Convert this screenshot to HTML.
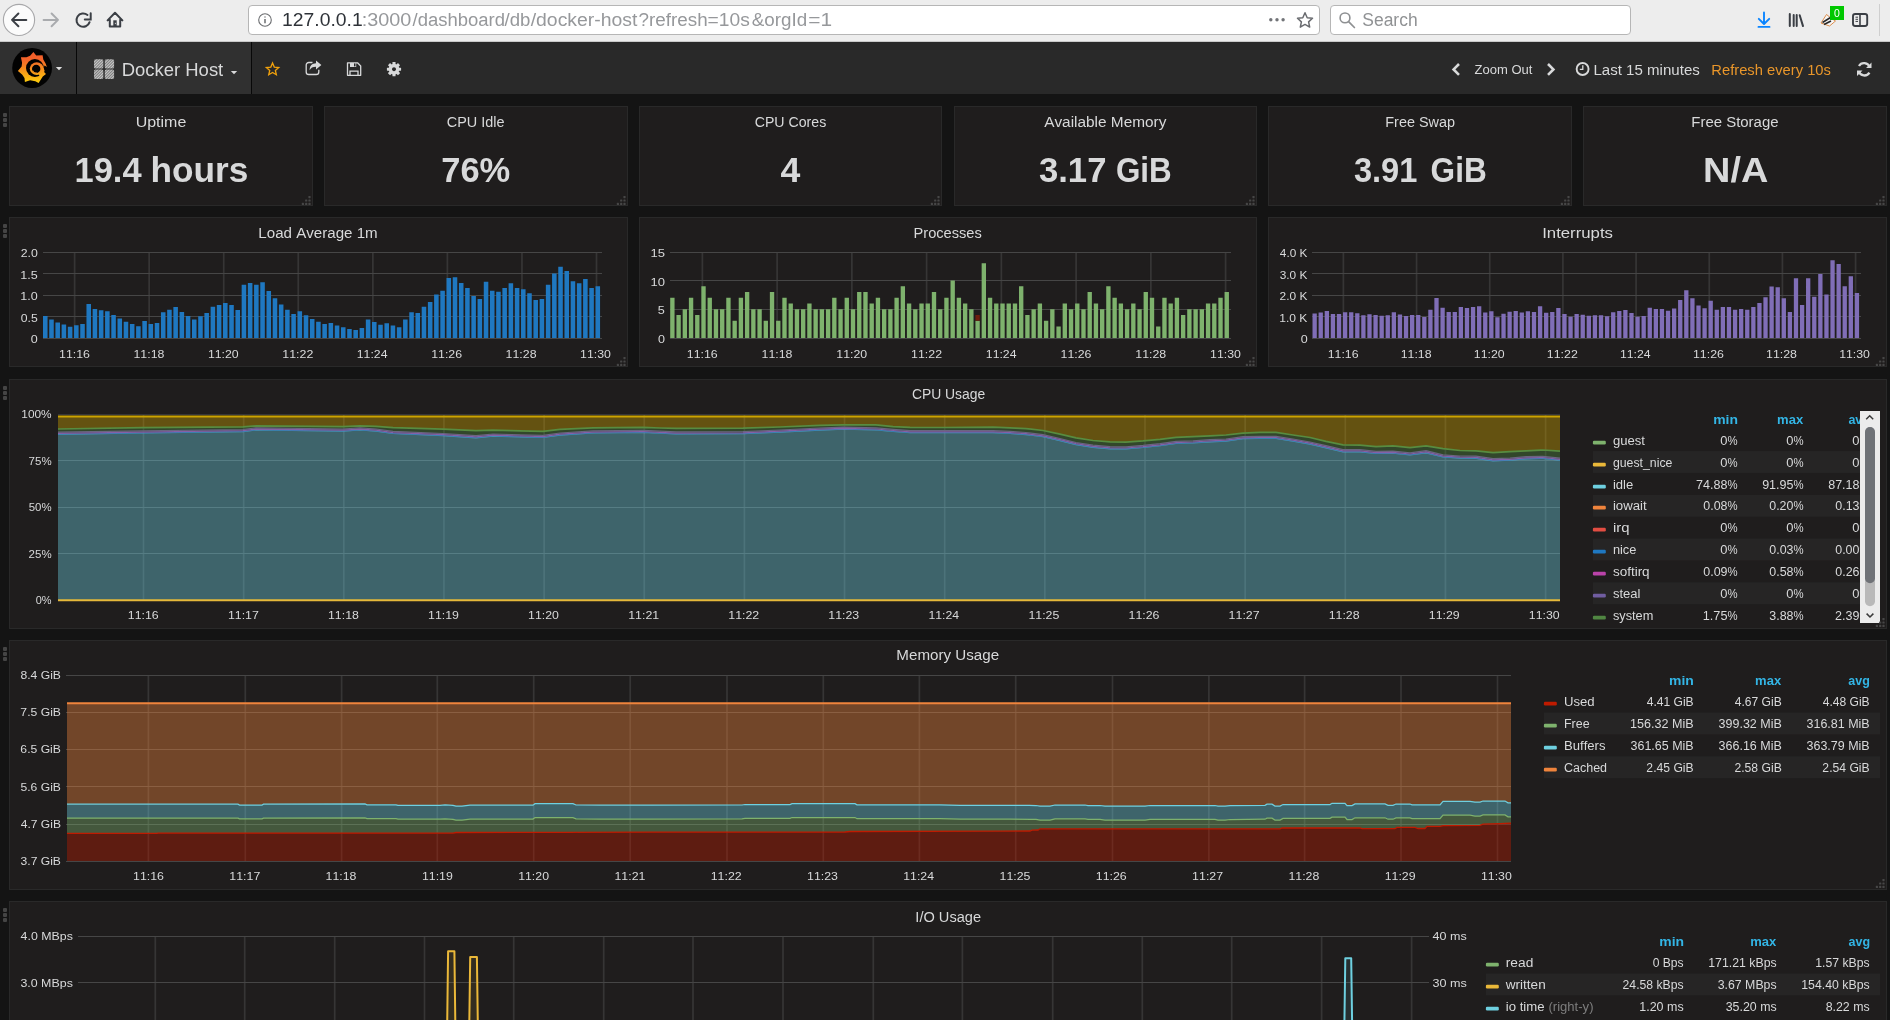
<!DOCTYPE html>
<html lang="en"><head><meta charset="utf-8"><title>Grafana - Docker Host</title>
<style>
*{box-sizing:border-box}
html,body{margin:0;padding:0;background:#141414}
body{width:1890px;height:1020px;overflow:hidden;background:#141414;position:relative;font-family:"Liberation Sans",sans-serif;color:#d8d9da}
svg{display:block;position:absolute;left:0;top:0;overflow:hidden;will-change:transform}
text{font-family:"Liberation Sans",sans-serif;white-space:pre;font-kerning:none}
.chrome{position:absolute;left:0;top:0;width:1890px;height:42px;background:#ededed;border-bottom:1px solid #c9c9c9}
.navbar{position:absolute;left:0;top:42px;width:1890px;height:52px;background:#292929}
.dash{position:absolute;left:0;top:94px;width:1890px;height:926px}
.panel{position:absolute;background:#1f1d1d;border:1px solid #292929;margin-top:-94px;overflow:hidden}
.panel svg{left:-1px;top:-1px}
.rowh{position:absolute;left:3px;width:4px;margin-top:-94px}
.rowh i{display:block;width:4px;height:4px;background:#454545;margin-bottom:1px;border-radius:1px}
</style></head><body>
<header class="chrome"><svg width="1890" height="42" viewBox="0 0 1890 42">
<circle cx="19" cy="19.95" r="15.600" fill="#fbfbfb" stroke="#a8a8aa" stroke-width="1.100"/>
<path d="M26.3 19.9H12.2M18.4 13.5l-6.4 6.4l6.4 6.4" stroke="#3b3f45" stroke-width="2" fill="none" stroke-linecap="round" stroke-linejoin="round"/>
<path d="M43.6 19.9H57.8M51.6 13.5l6.400 6.4l-6.400 6.4" stroke="#a9abae" stroke-width="2" fill="none" stroke-linecap="round" stroke-linejoin="round"/>
<path d="M87.51 14.97A6.7 6.7 0 1 0 89.57 22.17" stroke="#3b3f45" stroke-width="2" fill="none" stroke-linecap="round"/>
<path d="M90.7 13.300v6.100h-5.900" fill="none" stroke="#3b3f45" stroke-width="2" stroke-linejoin="miter" stroke-linecap="round"/>
<path d="M107.600 20.400l7.400-7.600l7.400 7.600M109.800 19.800v6.600h10.400v-6.600" stroke="#3b3f45" stroke-width="2" fill="none" stroke-linecap="round" stroke-linejoin="round"/>
<rect x="113.300" y="20.300" width="3.400" height="6.100" fill="#3b3f45"/><rect x="114.900" y="22.800" width="0.900" height="1.300" fill="#d8d8d8"/>
<rect x="248.5" y="5.5" width="1071" height="29" rx="3.5" fill="#fff" stroke="#b6b6b6"/>
<circle cx="265" cy="20" r="6.3" fill="none" stroke="#6b6d70" stroke-width="1.1"/>
<path d="M265 19v4.3M265 16.4v1.2" stroke="#6b6d70" stroke-width="1.5"/>
<text y="26" font-size="18" fill="#96989b"><tspan x="282.13" textLength="80.62" lengthAdjust="spacingAndGlyphs" fill="#2e3238">127.0.0.1</tspan><tspan x="361.79" textLength="49.58" lengthAdjust="spacingAndGlyphs">:3000</tspan><tspan x="412.50" textLength="92.49" lengthAdjust="spacingAndGlyphs">/dashboard</tspan><tspan x="504.50" textLength="25.88" lengthAdjust="spacingAndGlyphs">/db</tspan><tspan x="530.70" textLength="106.74" lengthAdjust="spacingAndGlyphs">/docker-host</tspan><tspan x="638.53" textLength="69.10" lengthAdjust="spacingAndGlyphs">?refresh</tspan><tspan x="707.56" textLength="42.23" lengthAdjust="spacingAndGlyphs">=10s</tspan><tspan x="751.74" textLength="55.48" lengthAdjust="spacingAndGlyphs">&amp;orgId</tspan><tspan x="808.28" textLength="23.84" lengthAdjust="spacingAndGlyphs">=1</tspan></text>
<g fill="#727478"><circle cx="1270.8" cy="19.8" r="1.7"/><circle cx="1277" cy="19.8" r="1.7"/><circle cx="1283.1" cy="19.8" r="1.7"/></g>
<path d="M1305 12.8l2.2 4.9l5.300 .6l-3.900 3.600l1.100 5.200l-4.700-2.700l-4.700 2.700l1.100-5.200l-3.900-3.600l5.300-.6z" fill="none" stroke="#6a6c70" stroke-width="1.500" stroke-linejoin="round"/>
<rect x="1330.5" y="5.5" width="300" height="29" rx="3.5" fill="#fff" stroke="#b6b6b6"/>
<circle cx="1345" cy="17.9" r="4.9" fill="none" stroke="#8e9092" stroke-width="1.600"/>
<path d="M1348.600 21.700l5.800 5.800" stroke="#8e9092" stroke-width="1.700" stroke-linecap="round"/>
<text x="1362.31" y="26" font-size="18" fill="#909294" textLength="55.33" lengthAdjust="spacingAndGlyphs">Search</text>
<path d="M1764 12.500v11.200M1758.800 18.800l5.200 5.200l5.200-5.200M1758.500 26.900h11" stroke="#0a84ff" stroke-width="1.900" fill="none" stroke-linecap="round" stroke-linejoin="round"/>
<path d="M1789.8 14v12.100M1793.7 15v11.100M1796.700 15v11.100M1799.700 15.300l3.300 10.800" stroke="#3b3f45" stroke-width="2" fill="none" stroke-linecap="round"/>
<path d="M1821 23l5.500-8.500l5 4l4 2.500l-6 5z" fill="#f5f5f5" stroke="#d9823a" stroke-width="0.9"/>
<path d="M1822.500 22.500l8-5M1824 24.500l7-3.500" stroke="#2a2a2a" stroke-width="1.500" fill="none"/>
<rect x="1830" y="6" width="14" height="14" fill="#00c800"/>
<text x="1834.09" y="16.5" font-size="10" fill="#ffffff" textLength="5.82" lengthAdjust="spacingAndGlyphs">0</text>
<rect x="1853" y="14" width="14.200" height="12" rx="2.200" fill="none" stroke="#3b3f45" stroke-width="1.900"/>
<path d="M1860 14v12" stroke="#3b3f45" stroke-width="1.600" fill="none"/><path d="M1855.500 17.200h2.500M1855.500 19.300h2.500M1855.500 21.400h2.500" stroke="#3b3f45" stroke-width="1" fill="none"/>
<path d="M1879.500 4v32" stroke="#cfcfcf" stroke-width="1"/>
</svg></header>
<nav class="navbar"><svg width="1890" height="52" viewBox="0 42 1890 52">
<defs><linearGradient id="gg" gradientUnits="userSpaceOnUse" x1="0" y1="52" x2="0" y2="83"><stop offset="0" stop-color="#f15b2a"/><stop offset="0.25" stop-color="#f2642a"/><stop offset="1" stop-color="#fcce0a"/></linearGradient>
<pattern id="hatch" width="2" height="2" patternUnits="userSpaceOnUse" patternTransform="rotate(-45)"><rect width="2" height="2" fill="#7d7d7d"/><rect width="2" height="1" fill="#c9c9c9"/></pattern></defs>
<rect x="0" y="42" width="251" height="52" fill="#303030"/>
<rect x="76" y="42" width="1" height="52" fill="#080808"/>
<rect x="251" y="42" width="1" height="52" fill="#080808"/>
<g class="logo"><circle cx="32.1" cy="68" r="19.9" fill="#020202"/>
<path d="M33.4 51.9L36.2 55.4L42.6 55.3L43.3 59.5L45.6 63.6L46.9 67L44.6 65.6L43.4 68L43.8 71.8L46 74.1L42.8 76.5L38.6 83.1L35.3 81.2L30.1 80.2L24.9 81.9L24.5 77.9L22.1 74.6L17.9 71.1L21.6 66.6L22.1 62.8L20.9 57.2L26.4 57.2L30.1 55.8Z" fill="url(#gg)"/>
<circle cx="34.9" cy="68" r="8.9" fill="#020202"/>
<path d="M43.2 67.5L44.6 70.5L43.4 74.5L40 76.2L38.6 74.6L41.6 71.5Z" fill="url(#gg)"/>
<ellipse cx="36.75" cy="68.6" rx="7" ry="6.3" fill="url(#gg)"/>
<circle cx="36.2" cy="68.9" r="4.2" fill="#020202"/>
<path d="M32.6 70.6Q33.6 73.4 36.8 72.9" fill="none" stroke="#ef8a1e" stroke-width="1.1"/>
</g>
<path d="M55.800 66.900h6.400l-3.200 3.300z" fill="#e0e0e0"/>
<g fill="url(#hatch)"><rect x="94" y="59.200" width="9.300" height="9.300" rx="1.500"/><rect x="104.800" y="59.200" width="9.300" height="9.300" rx="1.500"/><rect x="94" y="69.600" width="9.300" height="9.300" rx="1.500"/><rect x="104.800" y="69.600" width="9.300" height="9.300" rx="1.500"/></g>
<text x="121.69" y="75.7" font-size="18" fill="#d8d9da" textLength="101.55" lengthAdjust="spacingAndGlyphs">Docker Host</text>
<path d="M230.800 71h6.400l-3.200 3.300z" fill="#d8d9da"/>
<path d="M272.55 63.00L274.28 67.11L278.73 67.49L275.36 70.41L276.37 74.76L272.55 72.45L268.73 74.76L269.74 70.41L266.37 67.49L270.82 67.11Z" fill="none" stroke="#f2a20c" stroke-width="1.3" stroke-linejoin="miter"/>
<path d="M312.500 62.500h-3.700a2.600 2.600 0 0 0-2.600 2.600v6.800a2.600 2.600 0 0 0 2.600 2.600h7.400a2.600 2.600 0 0 0 2.600-2.600v-2.200" fill="none" stroke="#d8d9da" stroke-width="1.300"/>
<path d="M316 60.600l5.400 4.400l-5.400 4.400v-2.700c-3.200 0-5.200 1-6.400 3.600c0-4.600 2.600-6.800 6.400-7z" fill="#d8d9da"/>
<path d="M347.500 62.800h10l3.200 3.200v9.300h-13.200z" fill="none" stroke="#d8d9da" stroke-width="1.300" stroke-linejoin="round"/>
<path d="M350 63v4h6.200v-4z" fill="#d8d9da"/><rect x="354" y="63.400" width="1.500" height="3" fill="#292929"/><path d="M350 75v-3.800h8v3.800" fill="none" stroke="#d8d9da" stroke-width="1.300"/>
<g transform="translate(394 69.2)" fill="#d8d9da"><circle r="3.7" fill="none" stroke="#d8d9da" stroke-width="3.4"/><rect x="-1.55" y="-7.1" width="3.1" height="3.2" rx="0.4" transform="rotate(0)"/><rect x="-1.55" y="-7.1" width="3.1" height="3.2" rx="0.4" transform="rotate(45)"/><rect x="-1.55" y="-7.1" width="3.1" height="3.2" rx="0.4" transform="rotate(90)"/><rect x="-1.55" y="-7.1" width="3.1" height="3.2" rx="0.4" transform="rotate(135)"/><rect x="-1.55" y="-7.1" width="3.1" height="3.2" rx="0.4" transform="rotate(180)"/><rect x="-1.55" y="-7.1" width="3.1" height="3.2" rx="0.4" transform="rotate(225)"/><rect x="-1.55" y="-7.1" width="3.1" height="3.2" rx="0.4" transform="rotate(270)"/><rect x="-1.55" y="-7.1" width="3.1" height="3.2" rx="0.4" transform="rotate(315)"/></g>
<path d="M1459 64l-5.400 5.400l5.400 5.400" stroke="#d8d9da" stroke-width="2.600" fill="none"/>
<text x="1474.49" y="74" font-size="13" fill="#d8d9da" textLength="57.91" lengthAdjust="spacingAndGlyphs">Zoom Out</text>
<path d="M1548 64l5.400 5.400l-5.400 5.400" stroke="#d8d9da" stroke-width="2.600" fill="none"/>
<circle cx="1582.6" cy="69" r="5.95" fill="none" stroke="#d8d9da" stroke-width="1.9"/>
<path d="M1582.800 65.300v4h-3" stroke="#d8d9da" stroke-width="1.300" fill="none"/>
<text x="1593.46" y="75" font-size="14" fill="#d8d9da" textLength="106.38" lengthAdjust="spacingAndGlyphs">Last 15 minutes</text>
<text x="1711.29" y="75" font-size="14" fill="#e9962a" textLength="119.64" lengthAdjust="spacingAndGlyphs">Refresh every 10s</text>
<path d="M1869.600 67.300a5.800 5.800 0 0 0-10.600-1.300M1858.800 71.300a5.800 5.800 0 0 0 10.600 1.300" fill="none" stroke="#d8d9da" stroke-width="2.300"/>
<path d="M1871.500 62.500v5.500h-5.500zM1857 76.100v-5.500h5.500z" fill="#d8d9da"/>
</svg></nav>
<main class="dash">
<div class="rowh" style="top:113px"><i></i><i></i><i></i></div>
<section class="panel" style="left:9px;top:106px;width:304px;height:100px">
<svg width="304" height="100" viewBox="9 106 304 100">
<text x="135.67" y="127" font-size="14" fill="#d8d9da" textLength="50.64" lengthAdjust="spacingAndGlyphs">Uptime</text>
<text y="182.4" font-size="35" font-weight="700" fill="#d8d9da"><tspan x="74.53" textLength="76.63" lengthAdjust="spacingAndGlyphs">19.4 </tspan><tspan x="150.44" textLength="97.91" lengthAdjust="spacingAndGlyphs">hours</tspan></text>
<g fill="#474747"><rect x="308.4" y="202.8" width="2.2" height="2.2" rx="0.6"/><rect x="305.1" y="202.8" width="2.2" height="2.2" rx="0.6"/><rect x="301.8" y="202.8" width="2.2" height="2.2" rx="0.6"/><rect x="308.4" y="199.4" width="2.2" height="2.2" rx="0.6"/><rect x="305.1" y="199.4" width="2.2" height="2.2" rx="0.6"/><rect x="308.4" y="196.0" width="2.2" height="2.2" rx="0.6"/></g>
</svg></section>
<section class="panel" style="left:324px;top:106px;width:304px;height:100px">
<svg width="304" height="100" viewBox="324 106 304 100">
<text x="446.77" y="127" font-size="14" fill="#d8d9da" textLength="57.77" lengthAdjust="spacingAndGlyphs">CPU Idle</text>
<text x="441.22" y="182.4" font-size="35" font-weight="700" fill="#d8d9da" textLength="69.09" lengthAdjust="spacingAndGlyphs">76%</text>
<g fill="#474747"><rect x="623.4" y="202.8" width="2.2" height="2.2" rx="0.6"/><rect x="620.1" y="202.8" width="2.2" height="2.2" rx="0.6"/><rect x="616.8" y="202.8" width="2.2" height="2.2" rx="0.6"/><rect x="623.4" y="199.4" width="2.2" height="2.2" rx="0.6"/><rect x="620.1" y="199.4" width="2.2" height="2.2" rx="0.6"/><rect x="623.4" y="196.0" width="2.2" height="2.2" rx="0.6"/></g>
</svg></section>
<section class="panel" style="left:639px;top:106px;width:303px;height:100px">
<svg width="303" height="100" viewBox="639 106 303 100">
<text x="754.68" y="127" font-size="14" fill="#d8d9da" textLength="71.53" lengthAdjust="spacingAndGlyphs">CPU Cores</text>
<text x="780.46" y="182.4" font-size="35" font-weight="700" fill="#d8d9da" textLength="19.83" lengthAdjust="spacingAndGlyphs">4</text>
<g fill="#474747"><rect x="937.4" y="202.8" width="2.2" height="2.2" rx="0.6"/><rect x="934.1" y="202.8" width="2.2" height="2.2" rx="0.6"/><rect x="930.8" y="202.8" width="2.2" height="2.2" rx="0.6"/><rect x="937.4" y="199.4" width="2.2" height="2.2" rx="0.6"/><rect x="934.1" y="199.4" width="2.2" height="2.2" rx="0.6"/><rect x="937.4" y="196.0" width="2.2" height="2.2" rx="0.6"/></g>
</svg></section>
<section class="panel" style="left:954px;top:106px;width:303px;height:100px">
<svg width="303" height="100" viewBox="954 106 303 100">
<text x="1044.17" y="127" font-size="14" fill="#d8d9da" textLength="122.26" lengthAdjust="spacingAndGlyphs">Available Memory</text>
<text y="182.4" font-size="35" font-weight="700" fill="#d8d9da"><tspan x="1038.90" textLength="77.28" lengthAdjust="spacingAndGlyphs">3.17 </tspan><tspan x="1115.91" textLength="55.81" lengthAdjust="spacingAndGlyphs">GiB</tspan></text>
<g fill="#474747"><rect x="1252.4" y="202.8" width="2.2" height="2.2" rx="0.6"/><rect x="1249.1" y="202.8" width="2.2" height="2.2" rx="0.6"/><rect x="1245.8" y="202.8" width="2.2" height="2.2" rx="0.6"/><rect x="1252.4" y="199.4" width="2.2" height="2.2" rx="0.6"/><rect x="1249.1" y="199.4" width="2.2" height="2.2" rx="0.6"/><rect x="1252.4" y="196.0" width="2.2" height="2.2" rx="0.6"/></g>
</svg></section>
<section class="panel" style="left:1268px;top:106px;width:304px;height:100px">
<svg width="304" height="100" viewBox="1268 106 304 100">
<text x="1385.32" y="127" font-size="14" fill="#d8d9da" textLength="69.69" lengthAdjust="spacingAndGlyphs">Free Swap</text>
<text y="182.4" font-size="35" font-weight="700" fill="#d8d9da"><tspan x="1353.95" textLength="72.51" lengthAdjust="spacingAndGlyphs">3.91 </tspan><tspan x="1430.61" textLength="56.13" lengthAdjust="spacingAndGlyphs">GiB</tspan></text>
<g fill="#474747"><rect x="1567.4" y="202.8" width="2.2" height="2.2" rx="0.6"/><rect x="1564.1" y="202.8" width="2.2" height="2.2" rx="0.6"/><rect x="1560.8" y="202.8" width="2.2" height="2.2" rx="0.6"/><rect x="1567.4" y="199.4" width="2.2" height="2.2" rx="0.6"/><rect x="1564.1" y="199.4" width="2.2" height="2.2" rx="0.6"/><rect x="1567.4" y="196.0" width="2.2" height="2.2" rx="0.6"/></g>
</svg></section>
<section class="panel" style="left:1583px;top:106px;width:304px;height:100px">
<svg width="304" height="100" viewBox="1583 106 304 100">
<text x="1691.27" y="127" font-size="14" fill="#d8d9da" textLength="87.29" lengthAdjust="spacingAndGlyphs">Free Storage</text>
<text x="1703.07" y="182.4" font-size="35" font-weight="700" fill="#d8d9da" textLength="65.23" lengthAdjust="spacingAndGlyphs">N/A</text>
<g fill="#474747"><rect x="1882.4" y="202.8" width="2.2" height="2.2" rx="0.6"/><rect x="1879.1" y="202.8" width="2.2" height="2.2" rx="0.6"/><rect x="1875.8" y="202.8" width="2.2" height="2.2" rx="0.6"/><rect x="1882.4" y="199.4" width="2.2" height="2.2" rx="0.6"/><rect x="1879.1" y="199.4" width="2.2" height="2.2" rx="0.6"/><rect x="1882.4" y="196.0" width="2.2" height="2.2" rx="0.6"/></g>
</svg></section>
<div class="rowh" style="top:224px"><i></i><i></i><i></i></div>
<section class="panel" style="left:9px;top:217px;width:619px;height:150px">
<svg width="619" height="150" viewBox="9 217 619 150">
<text x="258.36" y="238" font-size="14" fill="#d8d9da" textLength="119.34" lengthAdjust="spacingAndGlyphs">Load Average 1m</text>
<path d="M43 252.5H601.5M43 273.5H601.5M43 295.5H601.5M43 316.5H601.5M43 338.5H601.5" stroke="#464646" stroke-width="1" fill="none" shape-rendering="crispEdges"/>
<path d="M74.60 252V339M149.16 252V339M223.72 252V339M298.28 252V339M372.84 252V339M447.40 252V339M521.96 252V339M596.52 252V339" stroke="#464646" stroke-width="1.7" stroke-opacity="0.6" fill="none"/>
<path d="M43.00 338v-21.95h4.55v21.95zM49.21 338v-18.52h4.55v18.52zM55.42 338v-15.58h4.55v15.58zM61.62 338v-13.42h4.55v13.42zM67.83 338v-11.17h4.55v11.17zM74.04 338v-12.64h4.55v12.64zM80.25 338v-14.11h4.55v14.11zM86.46 338v-34.01h4.55v34.01zM92.66 338v-29.01h4.55v29.01zM98.87 338v-27.84h4.55v27.84zM105.08 338v-26.76h4.55v26.76zM111.29 338v-22.93h4.55v22.93zM117.50 338v-19.50h4.55v19.50zM123.70 338v-16.36h4.55v16.36zM129.91 338v-14.01h4.55v14.01zM136.12 338v-11.85h4.55v11.85zM142.33 338v-16.95h4.55v16.95zM148.54 338v-14.11h4.55v14.11zM154.74 338v-15.09h4.55v15.09zM160.95 338v-25.87h4.55v25.87zM167.16 338v-28.33h4.55v28.33zM173.37 338v-30.97h4.55v30.97zM179.58 338v-26.07h4.55v26.07zM185.78 338v-21.95h4.55v21.95zM191.99 338v-18.52h4.55v18.52zM198.20 338v-21.76h4.55v21.76zM204.41 338v-24.89h4.55v24.89zM210.62 338v-31.27h4.55v31.27zM216.82 338v-32.93h4.55v32.93zM223.03 338v-34.89h4.55v34.89zM229.24 338v-32.93h4.55v32.93zM235.45 338v-28.03h4.55v28.03zM241.66 338v-53.13h4.55v53.13zM247.86 338v-54.99h4.55v54.99zM254.07 338v-53.33h4.55v53.33zM260.28 338v-55.68h4.55v55.68zM266.49 338v-46.95h4.55v46.95zM272.70 338v-39.80h4.55v39.80zM278.90 338v-33.62h4.55v33.62zM285.11 338v-28.33h4.55v28.33zM291.32 338v-23.91h4.55v23.91zM297.53 338v-26.66h4.55v26.66zM303.74 338v-22.84h4.55v22.84zM309.94 338v-18.91h4.55v18.91zM316.15 338v-16.36h4.55v16.36zM322.36 338v-13.91h4.55v13.91zM328.57 338v-14.89h4.55v14.89zM334.78 338v-12.44h4.55v12.44zM340.98 338v-10.87h4.55v10.87zM347.19 338v-8.91h4.55v8.91zM353.40 338v-7.93h4.55v7.93zM359.61 338v-9.89h4.55v9.89zM365.82 338v-18.42h4.55v18.42zM372.02 338v-15.97h4.55v15.97zM378.23 338v-13.33h4.55v13.33zM384.44 338v-14.80h4.55v14.80zM390.65 338v-12.44h4.55v12.44zM396.86 338v-10.87h4.55v10.87zM403.06 338v-18.42h4.55v18.42zM409.27 338v-25.78h4.55v25.78zM415.48 338v-24.89h4.55v24.89zM421.69 338v-31.27h4.55v31.27zM427.90 338v-35.97h4.55v35.97zM434.10 338v-43.42h4.55v43.42zM440.31 338v-47.15h4.55v47.15zM446.52 338v-59.99h4.55v59.99zM452.73 338v-60.87h4.55v60.87zM458.94 338v-54.89h4.55v54.89zM465.14 338v-49.89h4.55v49.89zM471.35 338v-42.05h4.55v42.05zM477.56 338v-38.91h4.55v38.91zM483.77 338v-56.17h4.55v56.17zM489.98 338v-47.15h4.55v47.15zM496.18 338v-46.36h4.55v46.36zM502.39 338v-49.89h4.55v49.89zM508.60 338v-54.80h4.55v54.80zM514.81 338v-49.89h4.55v49.89zM521.02 338v-48.72h4.55v48.72zM527.22 338v-44.80h4.55v44.80zM533.43 338v-37.93h4.55v37.93zM539.64 338v-38.91h4.55v38.91zM545.85 338v-53.23h4.55v53.23zM552.06 338v-64.60h4.55v64.60zM558.26 338v-71.27h4.55v71.27zM564.47 338v-66.95h4.55v66.95zM570.68 338v-56.85h4.55v56.85zM576.89 338v-54.80h4.55v54.80zM583.10 338v-58.91h4.55v58.91zM589.30 338v-49.89h4.55v49.89zM595.51 338v-51.76h4.55v51.76z" fill="#1f78c1"/>
<text x="20.68" y="257" font-size="11" fill="#d8d9da" textLength="17.10" lengthAdjust="spacingAndGlyphs">2.0</text>
<text x="20.34" y="279" font-size="11" fill="#d8d9da" textLength="17.49" lengthAdjust="spacingAndGlyphs">1.5</text>
<text x="20.34" y="300" font-size="11" fill="#d8d9da" textLength="17.45" lengthAdjust="spacingAndGlyphs">1.0</text>
<text x="20.82" y="322" font-size="11" fill="#d8d9da" textLength="16.99" lengthAdjust="spacingAndGlyphs">0.5</text>
<text x="30.81" y="343" font-size="11" fill="#d8d9da" textLength="6.98" lengthAdjust="spacingAndGlyphs">0</text>
<text x="59.06" y="358" font-size="11" fill="#d8d9da" textLength="30.88" lengthAdjust="spacingAndGlyphs">11:16</text>
<text x="133.49" y="358" font-size="11" fill="#d8d9da" textLength="30.88" lengthAdjust="spacingAndGlyphs">11:18</text>
<text x="207.92" y="358" font-size="11" fill="#d8d9da" textLength="30.82" lengthAdjust="spacingAndGlyphs">11:20</text>
<text x="282.35" y="358" font-size="11" fill="#d8d9da" textLength="30.96" lengthAdjust="spacingAndGlyphs">11:22</text>
<text x="356.79" y="358" font-size="11" fill="#d8d9da" textLength="30.69" lengthAdjust="spacingAndGlyphs">11:24</text>
<text x="431.21" y="358" font-size="11" fill="#d8d9da" textLength="30.88" lengthAdjust="spacingAndGlyphs">11:26</text>
<text x="505.64" y="358" font-size="11" fill="#d8d9da" textLength="30.88" lengthAdjust="spacingAndGlyphs">11:28</text>
<text x="580.07" y="358" font-size="11" fill="#d8d9da" textLength="30.82" lengthAdjust="spacingAndGlyphs">11:30</text>
<g fill="#474747"><rect x="623.4" y="363.8" width="2.2" height="2.2" rx="0.6"/><rect x="620.1" y="363.8" width="2.2" height="2.2" rx="0.6"/><rect x="616.8" y="363.8" width="2.2" height="2.2" rx="0.6"/><rect x="623.4" y="360.4" width="2.2" height="2.2" rx="0.6"/><rect x="620.1" y="360.4" width="2.2" height="2.2" rx="0.6"/><rect x="623.4" y="357.0" width="2.2" height="2.2" rx="0.6"/></g>
</svg></section>
<section class="panel" style="left:639px;top:217px;width:618px;height:150px">
<svg width="618" height="150" viewBox="639 217 618 150">
<text x="913.50" y="238" font-size="14" fill="#d8d9da" textLength="68.33" lengthAdjust="spacingAndGlyphs">Processes</text>
<path d="M670 252.5H1230.5M670 280.5H1230.5M670 309.5H1230.5M670 338.5H1230.5" stroke="#464646" stroke-width="1" fill="none" shape-rendering="crispEdges"/>
<path d="M702.40 252V339M777.14 252V339M851.88 252V339M926.62 252V339M1001.36 252V339M1076.10 252V339M1150.84 252V339M1225.58 252V339" stroke="#464646" stroke-width="1.7" stroke-opacity="0.6" fill="none"/>
<path d="M670.20 338v-40.28h4.35v40.28zM676.43 338v-23.02h4.35v23.02zM682.66 338v-28.77h4.35v28.77zM688.89 338v-40.28h4.35v40.28zM695.12 338v-23.02h4.35v23.02zM701.35 338v-51.80h4.35v51.80zM707.57 338v-40.28h4.35v40.28zM713.80 338v-28.77h4.35v28.77zM720.03 338v-28.77h4.35v28.77zM726.26 338v-40.28h4.35v40.28zM732.49 338v-17.27h4.35v17.27zM738.72 338v-40.28h4.35v40.28zM744.95 338v-46.04h4.35v46.04zM751.18 338v-28.77h4.35v28.77zM757.41 338v-28.77h4.35v28.77zM763.63 338v-17.27h4.35v17.27zM769.86 338v-46.04h4.35v46.04zM776.09 338v-17.27h4.35v17.27zM782.32 338v-40.28h4.35v40.28zM788.55 338v-34.53h4.35v34.53zM794.78 338v-28.77h4.35v28.77zM801.01 338v-28.77h4.35v28.77zM807.24 338v-34.53h4.35v34.53zM813.47 338v-28.77h4.35v28.77zM819.70 338v-28.77h4.35v28.77zM825.93 338v-28.77h4.35v28.77zM832.15 338v-40.28h4.35v40.28zM838.38 338v-28.77h4.35v28.77zM844.61 338v-40.28h4.35v40.28zM850.84 338v-28.77h4.35v28.77zM857.07 338v-46.04h4.35v46.04zM863.30 338v-46.04h4.35v46.04zM869.53 338v-34.53h4.35v34.53zM875.76 338v-40.28h4.35v40.28zM881.99 338v-28.77h4.35v28.77zM888.22 338v-28.77h4.35v28.77zM894.44 338v-40.28h4.35v40.28zM900.67 338v-51.80h4.35v51.80zM906.90 338v-34.53h4.35v34.53zM913.13 338v-28.77h4.35v28.77zM919.36 338v-34.53h4.35v34.53zM925.59 338v-34.53h4.35v34.53zM931.82 338v-46.04h4.35v46.04zM938.05 338v-28.77h4.35v28.77zM944.28 338v-40.28h4.35v40.28zM950.51 338v-57.55h4.35v57.55zM956.73 338v-40.28h4.35v40.28zM962.96 338v-34.53h4.35v34.53zM969.19 338v-28.77h4.35v28.77zM975.42 338v-17.27h4.35v17.27zM981.65 338v-74.81h4.35v74.81zM987.88 338v-40.28h4.35v40.28zM994.11 338v-34.53h4.35v34.53zM1000.34 338v-34.53h4.35v34.53zM1006.57 338v-34.53h4.35v34.53zM1012.80 338v-34.53h4.35v34.53zM1019.02 338v-51.80h4.35v51.80zM1025.25 338v-23.02h4.35v23.02zM1031.48 338v-28.77h4.35v28.77zM1037.71 338v-34.53h4.35v34.53zM1043.94 338v-17.27h4.35v17.27zM1050.17 338v-28.77h4.35v28.77zM1056.40 338v-11.51h4.35v11.51zM1062.63 338v-34.53h4.35v34.53zM1068.86 338v-28.77h4.35v28.77zM1075.09 338v-34.53h4.35v34.53zM1081.31 338v-28.77h4.35v28.77zM1087.54 338v-46.04h4.35v46.04zM1093.77 338v-34.53h4.35v34.53zM1100.00 338v-28.77h4.35v28.77zM1106.23 338v-51.80h4.35v51.80zM1112.46 338v-40.28h4.35v40.28zM1118.69 338v-34.53h4.35v34.53zM1124.92 338v-28.77h4.35v28.77zM1131.15 338v-34.53h4.35v34.53zM1137.38 338v-28.77h4.35v28.77zM1143.60 338v-46.04h4.35v46.04zM1149.83 338v-40.28h4.35v40.28zM1156.06 338v-11.51h4.35v11.51zM1162.29 338v-40.28h4.35v40.28zM1168.52 338v-34.53h4.35v34.53zM1174.75 338v-40.28h4.35v40.28zM1180.98 338v-23.02h4.35v23.02zM1187.21 338v-28.77h4.35v28.77zM1193.44 338v-28.77h4.35v28.77zM1199.66 338v-28.77h4.35v28.77zM1205.89 338v-34.53h4.35v34.53zM1212.12 338v-34.53h4.35v34.53zM1218.35 338v-40.28h4.35v40.28zM1224.58 338v-46.04h4.35v46.04z" fill="#7eb26d"/>
<rect x="975.42" y="314.98" width="4.35" height="5.755" fill="#6d1f0e"/>
<text x="650.40" y="257" font-size="11" fill="#d8d9da" textLength="14.55" lengthAdjust="spacingAndGlyphs">15</text>
<text x="650.41" y="286" font-size="11" fill="#d8d9da" textLength="14.50" lengthAdjust="spacingAndGlyphs">10</text>
<text x="657.89" y="314" font-size="11" fill="#d8d9da" textLength="7.04" lengthAdjust="spacingAndGlyphs">5</text>
<text x="657.91" y="343" font-size="11" fill="#d8d9da" textLength="6.98" lengthAdjust="spacingAndGlyphs">0</text>
<text x="686.86" y="358" font-size="11" fill="#d8d9da" textLength="30.88" lengthAdjust="spacingAndGlyphs">11:16</text>
<text x="761.60" y="358" font-size="11" fill="#d8d9da" textLength="30.88" lengthAdjust="spacingAndGlyphs">11:18</text>
<text x="836.34" y="358" font-size="11" fill="#d8d9da" textLength="30.82" lengthAdjust="spacingAndGlyphs">11:20</text>
<text x="911.08" y="358" font-size="11" fill="#d8d9da" textLength="30.96" lengthAdjust="spacingAndGlyphs">11:22</text>
<text x="985.83" y="358" font-size="11" fill="#d8d9da" textLength="30.69" lengthAdjust="spacingAndGlyphs">11:24</text>
<text x="1060.56" y="358" font-size="11" fill="#d8d9da" textLength="30.88" lengthAdjust="spacingAndGlyphs">11:26</text>
<text x="1135.30" y="358" font-size="11" fill="#d8d9da" textLength="30.88" lengthAdjust="spacingAndGlyphs">11:28</text>
<text x="1210.04" y="358" font-size="11" fill="#d8d9da" textLength="30.82" lengthAdjust="spacingAndGlyphs">11:30</text>
<g fill="#474747"><rect x="1252.4" y="363.8" width="2.2" height="2.2" rx="0.6"/><rect x="1249.1" y="363.8" width="2.2" height="2.2" rx="0.6"/><rect x="1245.8" y="363.8" width="2.2" height="2.2" rx="0.6"/><rect x="1252.4" y="360.4" width="2.2" height="2.2" rx="0.6"/><rect x="1249.1" y="360.4" width="2.2" height="2.2" rx="0.6"/><rect x="1252.4" y="357.0" width="2.2" height="2.2" rx="0.6"/></g>
</svg></section>
<section class="panel" style="left:1268px;top:217px;width:619px;height:150px">
<svg width="619" height="150" viewBox="1268 217 619 150">
<text x="1542.15" y="238" font-size="14" fill="#d8d9da" textLength="70.85" lengthAdjust="spacingAndGlyphs">Interrupts</text>
<path d="M1312 252.5H1860.5M1312 273.5H1860.5M1312 295.5H1860.5M1312 316.5H1860.5M1312 338.5H1860.5" stroke="#464646" stroke-width="1" fill="none" shape-rendering="crispEdges"/>
<path d="M1343.40 252V339M1416.57 252V339M1489.74 252V339M1562.91 252V339M1636.08 252V339M1709.25 252V339M1782.42 252V339M1855.59 252V339" stroke="#464646" stroke-width="1.7" stroke-opacity="0.6" fill="none"/>
<path d="M1312.50 338v-24.40h4.3v24.40zM1318.59 338v-25.38h4.3v25.38zM1324.69 338v-26.95h4.3v26.95zM1330.78 338v-24.01h4.3v24.01zM1336.87 338v-24.01h4.3v24.01zM1342.96 338v-25.87h4.3v25.87zM1349.06 338v-25.87h4.3v25.87zM1355.15 338v-24.80h4.3v24.80zM1361.24 338v-22.74h4.3v22.74zM1367.34 338v-23.82h4.3v23.82zM1373.43 338v-23.03h4.3v23.03zM1379.52 338v-22.25h4.3v22.25zM1385.62 338v-22.74h4.3v22.74zM1391.71 338v-25.87h4.3v25.87zM1397.80 338v-23.62h4.3v23.62zM1403.89 338v-21.95h4.3v21.95zM1409.99 338v-22.93h4.3v22.93zM1416.08 338v-22.93h4.3v22.93zM1422.17 338v-20.97h4.3v20.97zM1428.27 338v-28.13h4.3v28.13zM1434.36 338v-39.89h4.3v39.89zM1440.45 338v-30.29h4.3v30.29zM1446.55 338v-26.07h4.3v26.07zM1452.64 338v-26.07h4.3v26.07zM1458.73 338v-31.07h4.3v31.07zM1464.83 338v-29.99h4.3v29.99zM1470.92 338v-31.07h4.3v31.07zM1477.01 338v-31.76h4.3v31.76zM1483.10 338v-25.38h4.3v25.38zM1489.20 338v-26.66h4.3v26.66zM1495.29 338v-20.87h4.3v20.87zM1501.38 338v-24.21h4.3v24.21zM1507.48 338v-26.36h4.3v26.36zM1513.57 338v-26.95h4.3v26.95zM1519.66 338v-25.58h4.3v25.58zM1525.76 338v-26.66h4.3v26.66zM1531.85 338v-25.97h4.3v25.97zM1537.94 338v-31.76h4.3v31.76zM1544.03 338v-25.19h4.3v25.19zM1550.13 338v-25.97h4.3v25.97zM1556.22 338v-30.09h4.3v30.09zM1562.31 338v-24.01h4.3v24.01zM1568.41 338v-21.36h4.3v21.36zM1574.50 338v-24.11h4.3v24.11zM1580.59 338v-23.13h4.3v23.13zM1586.68 338v-22.25h4.3v22.25zM1592.78 338v-22.74h4.3v22.74zM1598.87 338v-22.84h4.3v22.84zM1604.96 338v-21.76h4.3v21.76zM1611.06 338v-25.87h4.3v25.87zM1617.15 338v-27.05h4.3v27.05zM1623.24 338v-27.93h4.3v27.93zM1629.34 338v-25.09h4.3v25.09zM1635.43 338v-21.27h4.3v21.27zM1641.52 338v-21.95h4.3v21.95zM1647.62 338v-30.19h4.3v30.19zM1653.71 338v-29.01h4.3v29.01zM1659.80 338v-29.01h4.3v29.01zM1665.89 338v-27.25h4.3v27.25zM1671.99 338v-29.50h4.3v29.50zM1678.08 338v-37.93h4.3v37.93zM1684.17 338v-47.84h4.3v47.84zM1690.27 338v-39.80h4.3v39.80zM1696.36 338v-32.54h4.3v32.54zM1702.45 338v-29.70h4.3v29.70zM1708.55 338v-37.15h4.3v37.15zM1714.64 338v-28.13h4.3v28.13zM1720.73 338v-31.07h4.3v31.07zM1726.82 338v-31.07h4.3v31.07zM1732.92 338v-28.13h4.3v28.13zM1739.01 338v-28.91h4.3v28.91zM1745.10 338v-28.13h4.3v28.13zM1751.20 338v-31.07h4.3v31.07zM1757.29 338v-34.99h4.3v34.99zM1763.38 338v-40.87h4.3v40.87zM1769.47 338v-51.46h4.3v51.46zM1775.57 338v-50.87h4.3v50.87zM1781.66 338v-39.80h4.3v39.80zM1787.75 338v-26.07h4.3v26.07zM1793.85 338v-59.70h4.3v59.70zM1799.94 338v-33.03h4.3v33.03zM1806.03 338v-59.70h4.3v59.70zM1812.13 338v-41.27h4.3v41.27zM1818.22 338v-64.11h4.3v64.11zM1824.31 338v-43.52h4.3v43.52zM1830.40 338v-77.64h4.3v77.64zM1836.50 338v-74.11h4.3v74.11zM1842.59 338v-51.66h4.3v51.66zM1848.68 338v-61.66h4.3v61.66zM1854.78 338v-44.99h4.3v44.99z" fill="#806eb7"/>
<text x="1279.83" y="257" font-size="11" fill="#d8d9da" textLength="27.50" lengthAdjust="spacingAndGlyphs">4.0 K</text>
<text x="1279.65" y="279" font-size="11" fill="#d8d9da" textLength="27.68" lengthAdjust="spacingAndGlyphs">3.0 K</text>
<text x="1279.50" y="300" font-size="11" fill="#d8d9da" textLength="27.83" lengthAdjust="spacingAndGlyphs">2.0 K</text>
<text x="1279.18" y="322" font-size="11" fill="#d8d9da" textLength="28.15" lengthAdjust="spacingAndGlyphs">1.0 K</text>
<text x="1300.71" y="343" font-size="11" fill="#d8d9da" textLength="6.98" lengthAdjust="spacingAndGlyphs">0</text>
<text x="1327.66" y="358" font-size="11" fill="#d8d9da" textLength="30.88" lengthAdjust="spacingAndGlyphs">11:16</text>
<text x="1400.73" y="358" font-size="11" fill="#d8d9da" textLength="30.88" lengthAdjust="spacingAndGlyphs">11:18</text>
<text x="1473.80" y="358" font-size="11" fill="#d8d9da" textLength="30.82" lengthAdjust="spacingAndGlyphs">11:20</text>
<text x="1546.87" y="358" font-size="11" fill="#d8d9da" textLength="30.96" lengthAdjust="spacingAndGlyphs">11:22</text>
<text x="1619.95" y="358" font-size="11" fill="#d8d9da" textLength="30.69" lengthAdjust="spacingAndGlyphs">11:24</text>
<text x="1693.01" y="358" font-size="11" fill="#d8d9da" textLength="30.88" lengthAdjust="spacingAndGlyphs">11:26</text>
<text x="1766.08" y="358" font-size="11" fill="#d8d9da" textLength="30.88" lengthAdjust="spacingAndGlyphs">11:28</text>
<text x="1839.15" y="358" font-size="11" fill="#d8d9da" textLength="30.82" lengthAdjust="spacingAndGlyphs">11:30</text>
<g fill="#474747"><rect x="1882.4" y="363.8" width="2.2" height="2.2" rx="0.6"/><rect x="1879.1" y="363.8" width="2.2" height="2.2" rx="0.6"/><rect x="1875.8" y="363.8" width="2.2" height="2.2" rx="0.6"/><rect x="1882.4" y="360.4" width="2.2" height="2.2" rx="0.6"/><rect x="1879.1" y="360.4" width="2.2" height="2.2" rx="0.6"/><rect x="1882.4" y="357.0" width="2.2" height="2.2" rx="0.6"/></g>
</svg></section>
<div class="rowh" style="top:386px"><i></i><i></i><i></i></div>
<section class="panel" style="left:9px;top:379px;width:1878px;height:250px">
<svg width="1878" height="250" viewBox="9 379 1878 250">
<text x="911.89" y="399" font-size="14" fill="#d8d9da" textLength="73.32" lengthAdjust="spacingAndGlyphs">CPU Usage</text>
<path d="M58 460.5H1560M58 507.5H1560M58 553.5H1560M58 600.5H1560" stroke="#464646" stroke-width="1" fill="none" shape-rendering="crispEdges"/>
<path d="M143.50 414V601M243.65 414V601M343.80 414V601M443.95 414V601M544.10 414V601M644.25 414V601M744.40 414V601M844.55 414V601M944.70 414V601M1044.85 414V601M1145.00 414V601M1245.15 414V601M1345.30 414V601M1445.45 414V601M1545.60 414V601" stroke="#464646" stroke-width="1.7" stroke-opacity="0.6" fill="none"/>
<path d="M58 414.5H1560" stroke="#363639" stroke-width="1" fill="none" shape-rendering="crispEdges"/>
<path d="M58.0 434.30L143.0 433.00L243.0 431.60L256.0 430.00L343.0 431.10L360.0 430.00L376.0 431.10L393.0 433.50L443.0 435.60L476.0 437.80L493.0 436.10L543.0 437.50L560.0 435.10L593.0 433.00L643.0 432.40L660.0 433.20L676.0 434.00L743.0 433.70L780.0 432.10L820.0 430.10L843.0 429.20L876.0 429.90L893.0 431.40L910.0 432.70L943.0 432.70L993.0 432.70L1010.0 433.50L1026.0 434.60L1043.0 436.70L1060.0 440.60L1076.0 444.60L1093.0 447.30L1110.0 448.80L1126.0 448.90L1143.0 447.50L1160.0 445.70L1176.0 443.50L1193.0 442.90L1210.0 441.80L1226.0 441.10L1243.0 438.70L1260.0 438.40L1276.0 438.40L1293.0 441.10L1310.0 444.10L1326.0 447.80L1343.0 451.80L1360.0 451.80L1376.0 453.50L1393.0 453.20L1410.0 454.90L1426.0 452.80L1443.0 457.00L1460.0 458.10L1476.0 458.30L1493.0 460.80L1510.0 460.20L1526.0 458.80L1543.0 458.40L1560.0 460.20L1560 600L58 600Z" fill="#6ed0e0" fill-opacity="0.4"/>
<path d="M58.0 429.00L143.0 427.60L243.0 426.90L256.0 425.80L343.0 426.70L360.0 425.90L376.0 426.40L393.0 427.70L443.0 429.10L476.0 430.70L493.0 430.20L543.0 431.40L560.0 429.40L593.0 427.80L643.0 427.40L660.0 428.00L676.0 428.30L743.0 428.20L780.0 427.00L820.0 425.40L843.0 424.80L876.0 424.80L893.0 426.60L910.0 427.40L943.0 427.50L993.0 427.20L1010.0 427.80L1026.0 428.60L1043.0 430.50L1060.0 434.20L1076.0 437.80L1093.0 440.50L1110.0 441.90L1126.0 442.10L1143.0 440.90L1160.0 439.30L1176.0 437.40L1193.0 436.70L1210.0 435.80L1226.0 435.00L1243.0 433.10L1260.0 432.40L1276.0 432.40L1293.0 435.00L1310.0 437.50L1326.0 441.30L1343.0 444.80L1360.0 445.10L1376.0 446.60L1393.0 445.90L1410.0 447.70L1426.0 445.80L1443.0 448.70L1460.0 450.50L1476.0 450.90L1493.0 452.70L1510.0 451.60L1526.0 450.90L1543.0 450.00L1560.0 451.10L1560.0 459.30L1543.0 457.50L1526.0 457.90L1510.0 459.30L1493.0 459.90L1476.0 457.40L1460.0 457.20L1443.0 456.10L1426.0 451.90L1410.0 454.00L1393.0 452.30L1376.0 452.60L1360.0 450.90L1343.0 450.90L1326.0 446.90L1310.0 443.20L1293.0 440.20L1276.0 437.50L1260.0 437.50L1243.0 437.80L1226.0 440.20L1210.0 440.90L1193.0 442.00L1176.0 442.60L1160.0 444.80L1143.0 446.60L1126.0 448.00L1110.0 447.90L1093.0 446.40L1076.0 443.70L1060.0 439.70L1043.0 435.80L1026.0 433.70L1010.0 432.60L993.0 431.80L943.0 431.80L910.0 431.80L893.0 430.50L876.0 429.00L843.0 428.30L820.0 429.20L780.0 431.20L743.0 432.80L676.0 433.10L660.0 432.30L643.0 431.50L593.0 432.10L560.0 434.20L543.0 436.60L493.0 435.20L476.0 436.90L443.0 434.70L393.0 432.60L376.0 430.20L360.0 429.10L343.0 430.20L256.0 429.10L243.0 430.70L143.0 432.10L58.0 433.40Z" fill="#508642" fill-opacity="0.4"/>
<path d="M58.0 416.40L143.0 416.40L243.0 416.40L256.0 416.40L343.0 416.40L360.0 416.40L376.0 416.40L393.0 416.40L443.0 416.40L476.0 416.40L493.0 416.40L543.0 416.40L560.0 416.40L593.0 416.40L643.0 416.40L660.0 416.40L676.0 416.40L743.0 416.40L780.0 416.40L820.0 416.40L843.0 416.40L876.0 416.40L893.0 416.40L910.0 416.40L943.0 416.40L993.0 416.40L1010.0 416.40L1026.0 416.40L1043.0 416.40L1060.0 416.40L1076.0 416.40L1093.0 416.40L1110.0 416.40L1126.0 416.40L1143.0 416.40L1160.0 416.40L1176.0 416.40L1193.0 416.40L1210.0 416.40L1226.0 416.40L1243.0 416.40L1260.0 416.40L1276.0 416.40L1293.0 416.40L1310.0 416.40L1326.0 416.40L1343.0 416.40L1360.0 416.40L1376.0 416.40L1393.0 416.40L1410.0 416.40L1426.0 416.40L1443.0 416.40L1460.0 416.40L1476.0 416.40L1493.0 416.40L1510.0 416.40L1526.0 416.40L1543.0 416.40L1560.0 416.40L1560.0 451.10L1543.0 450.00L1526.0 450.90L1510.0 451.60L1493.0 452.70L1476.0 450.90L1460.0 450.50L1443.0 448.70L1426.0 445.80L1410.0 447.70L1393.0 445.90L1376.0 446.60L1360.0 445.10L1343.0 444.80L1326.0 441.30L1310.0 437.50L1293.0 435.00L1276.0 432.40L1260.0 432.40L1243.0 433.10L1226.0 435.00L1210.0 435.80L1193.0 436.70L1176.0 437.40L1160.0 439.30L1143.0 440.90L1126.0 442.10L1110.0 441.90L1093.0 440.50L1076.0 437.80L1060.0 434.20L1043.0 430.50L1026.0 428.60L1010.0 427.80L993.0 427.20L943.0 427.50L910.0 427.40L893.0 426.60L876.0 424.80L843.0 424.80L820.0 425.40L780.0 427.00L743.0 428.20L676.0 428.30L660.0 428.00L643.0 427.40L593.0 427.80L560.0 429.40L543.0 431.40L493.0 430.20L476.0 430.70L443.0 429.10L393.0 427.70L376.0 426.40L360.0 425.90L343.0 426.70L256.0 425.80L243.0 426.90L143.0 427.60L58.0 429.00Z" fill="#cca300" fill-opacity="0.4"/>
<path d="M58.0 434.30L143.0 433.00L243.0 431.60L256.0 430.00L343.0 431.10L360.0 430.00L376.0 431.10L393.0 433.50L443.0 435.60L476.0 437.80L493.0 436.10L543.0 437.50L560.0 435.10L593.0 433.00L643.0 432.40L660.0 433.20L676.0 434.00L743.0 433.70L780.0 432.10L820.0 430.10L843.0 429.20L876.0 429.90L893.0 431.40L910.0 432.70L943.0 432.70L993.0 432.70L1010.0 433.50L1026.0 434.60L1043.0 436.70L1060.0 440.60L1076.0 444.60L1093.0 447.30L1110.0 448.80L1126.0 448.90L1143.0 447.50L1160.0 445.70L1176.0 443.50L1193.0 442.90L1210.0 441.80L1226.0 441.10L1243.0 438.70L1260.0 438.40L1276.0 438.40L1293.0 441.10L1310.0 444.10L1326.0 447.80L1343.0 451.80L1360.0 451.80L1376.0 453.50L1393.0 453.20L1410.0 454.90L1426.0 452.80L1443.0 457.00L1460.0 458.10L1476.0 458.30L1493.0 460.80L1510.0 460.20L1526.0 458.80L1543.0 458.40L1560.0 460.20" stroke="#6ed0e0" stroke-width="1.2" fill="none" opacity="0.55"/>
<path d="M58.0 432.20L143.0 430.90L243.0 429.50L256.0 427.90L343.0 429.00L360.0 427.90L376.0 429.00L393.0 431.40L443.0 433.50L476.0 435.70L493.0 434.00L543.0 435.40L560.0 433.00L593.0 430.90L643.0 430.30L660.0 431.10L676.0 431.90L743.0 431.60L780.0 430.00L820.0 428.00L843.0 427.10L876.0 427.80L893.0 429.30L910.0 430.60L943.0 430.60L993.0 430.60L1010.0 431.40L1026.0 432.50L1043.0 434.60L1060.0 438.50L1076.0 442.50L1093.0 445.20L1110.0 446.70L1126.0 446.80L1143.0 445.40L1160.0 443.60L1176.0 441.40L1193.0 440.80L1210.0 439.70L1226.0 439.00L1243.0 436.60L1260.0 436.30L1276.0 436.30L1293.0 439.00L1310.0 442.00L1326.0 445.70L1343.0 449.70L1360.0 449.70L1376.0 451.40L1393.0 451.10L1410.0 452.80L1426.0 450.70L1443.0 454.90L1460.0 456.00L1476.0 456.20L1493.0 458.70L1510.0 458.10L1526.0 456.70L1543.0 456.30L1560.0 458.10" stroke="#6a6680" stroke-width="1.2" fill="none"/>
<path d="M58.0 434.30L143.0 433.00L243.0 431.60L256.0 430.00L343.0 431.10L360.0 430.00L376.0 431.10L393.0 433.50L443.0 435.60L476.0 437.80L493.0 436.10L543.0 437.50L560.0 435.10L593.0 433.00L643.0 432.40L660.0 433.20L676.0 434.00L743.0 433.70L780.0 432.10L820.0 430.10L843.0 429.20L876.0 429.90L893.0 431.40L910.0 432.70L943.0 432.70L993.0 432.70L1010.0 433.50L1026.0 434.60L1043.0 436.70L1060.0 440.60L1076.0 444.60L1093.0 447.30L1110.0 448.80L1126.0 448.90L1143.0 447.50L1160.0 445.70L1176.0 443.50L1193.0 442.90L1210.0 441.80L1226.0 441.10L1243.0 438.70L1260.0 438.40L1276.0 438.40L1293.0 441.10L1310.0 444.10L1326.0 447.80L1343.0 451.80L1360.0 451.80L1376.0 453.50L1393.0 453.20L1410.0 454.90L1426.0 452.80L1443.0 457.00L1460.0 458.10L1476.0 458.30L1493.0 460.80L1510.0 460.20L1526.0 458.80L1543.0 458.40L1560.0 460.20" stroke="#2a78c0" stroke-width="1" fill="none" opacity="0.7"/>
<path d="M58.0 433.40L143.0 432.10L243.0 430.70L256.0 429.10L343.0 430.20L360.0 429.10L376.0 430.20L393.0 432.60L443.0 434.70L476.0 436.90L493.0 435.20L543.0 436.60L560.0 434.20L593.0 432.10L643.0 431.50L660.0 432.30L676.0 433.10L743.0 432.80L780.0 431.20L820.0 429.20L843.0 428.30L876.0 429.00L893.0 430.50L910.0 431.80L943.0 431.80L993.0 431.80L1010.0 432.60L1026.0 433.70L1043.0 435.80L1060.0 439.70L1076.0 443.70L1093.0 446.40L1110.0 447.90L1126.0 448.00L1143.0 446.60L1160.0 444.80L1176.0 442.60L1193.0 442.00L1210.0 440.90L1226.0 440.20L1243.0 437.80L1260.0 437.50L1276.0 437.50L1293.0 440.20L1310.0 443.20L1326.0 446.90L1343.0 450.90L1360.0 450.90L1376.0 452.60L1393.0 452.30L1410.0 454.00L1426.0 451.90L1443.0 456.10L1460.0 457.20L1476.0 457.40L1493.0 459.90L1510.0 459.30L1526.0 457.90L1543.0 457.50L1560.0 459.30" stroke="#8560a8" stroke-width="1.2" fill="none"/>
<path d="M58.0 429.00L143.0 427.60L243.0 426.90L256.0 425.80L343.0 426.70L360.0 425.90L376.0 426.40L393.0 427.70L443.0 429.10L476.0 430.70L493.0 430.20L543.0 431.40L560.0 429.40L593.0 427.80L643.0 427.40L660.0 428.00L676.0 428.30L743.0 428.20L780.0 427.00L820.0 425.40L843.0 424.80L876.0 424.80L893.0 426.60L910.0 427.40L943.0 427.50L993.0 427.20L1010.0 427.80L1026.0 428.60L1043.0 430.50L1060.0 434.20L1076.0 437.80L1093.0 440.50L1110.0 441.90L1126.0 442.10L1143.0 440.90L1160.0 439.30L1176.0 437.40L1193.0 436.70L1210.0 435.80L1226.0 435.00L1243.0 433.10L1260.0 432.40L1276.0 432.40L1293.0 435.00L1310.0 437.50L1326.0 441.30L1343.0 444.80L1360.0 445.10L1376.0 446.60L1393.0 445.90L1410.0 447.70L1426.0 445.80L1443.0 448.70L1460.0 450.50L1476.0 450.90L1493.0 452.70L1510.0 451.60L1526.0 450.90L1543.0 450.00L1560.0 451.10" stroke="#588c40" stroke-width="1.7" fill="none"/>
<path d="M58.0 416.40L143.0 416.40L243.0 416.40L256.0 416.40L343.0 416.40L360.0 416.40L376.0 416.40L393.0 416.40L443.0 416.40L476.0 416.40L493.0 416.40L543.0 416.40L560.0 416.40L593.0 416.40L643.0 416.40L660.0 416.40L676.0 416.40L743.0 416.40L780.0 416.40L820.0 416.40L843.0 416.40L876.0 416.40L893.0 416.40L910.0 416.40L943.0 416.40L993.0 416.40L1010.0 416.40L1026.0 416.40L1043.0 416.40L1060.0 416.40L1076.0 416.40L1093.0 416.40L1110.0 416.40L1126.0 416.40L1143.0 416.40L1160.0 416.40L1176.0 416.40L1193.0 416.40L1210.0 416.40L1226.0 416.40L1243.0 416.40L1260.0 416.40L1276.0 416.40L1293.0 416.40L1310.0 416.40L1326.0 416.40L1343.0 416.40L1360.0 416.40L1376.0 416.40L1393.0 416.40L1410.0 416.40L1426.0 416.40L1443.0 416.40L1460.0 416.40L1476.0 416.40L1493.0 416.40L1510.0 416.40L1526.0 416.40L1543.0 416.40L1560.0 416.40" stroke="#cca300" stroke-width="2" fill="none"/>
<path d="M58 600.3H1560" stroke="#e5b83a" stroke-width="2" fill="none"/>
<text x="21.30" y="418" font-size="11" fill="#d8d9da" textLength="30.33" lengthAdjust="spacingAndGlyphs">100%</text>
<text x="28.61" y="465" font-size="11" fill="#d8d9da" textLength="23.00" lengthAdjust="spacingAndGlyphs">75%</text>
<text x="28.74" y="511" font-size="11" fill="#d8d9da" textLength="22.86" lengthAdjust="spacingAndGlyphs">50%</text>
<text x="28.62" y="558" font-size="11" fill="#d8d9da" textLength="22.99" lengthAdjust="spacingAndGlyphs">25%</text>
<text x="35.77" y="604" font-size="11" fill="#d8d9da" textLength="15.82" lengthAdjust="spacingAndGlyphs">0%</text>
<text x="127.86" y="619" font-size="11" fill="#d8d9da" textLength="30.88" lengthAdjust="spacingAndGlyphs">11:16</text>
<text x="227.93" y="619" font-size="11" fill="#d8d9da" textLength="30.96" lengthAdjust="spacingAndGlyphs">11:17</text>
<text x="328.00" y="619" font-size="11" fill="#d8d9da" textLength="30.88" lengthAdjust="spacingAndGlyphs">11:18</text>
<text x="428.07" y="619" font-size="11" fill="#d8d9da" textLength="30.93" lengthAdjust="spacingAndGlyphs">11:19</text>
<text x="528.14" y="619" font-size="11" fill="#d8d9da" textLength="30.82" lengthAdjust="spacingAndGlyphs">11:20</text>
<text x="628.21" y="619" font-size="11" fill="#d8d9da" textLength="30.95" lengthAdjust="spacingAndGlyphs">11:21</text>
<text x="728.28" y="619" font-size="11" fill="#d8d9da" textLength="30.96" lengthAdjust="spacingAndGlyphs">11:22</text>
<text x="828.35" y="619" font-size="11" fill="#d8d9da" textLength="30.88" lengthAdjust="spacingAndGlyphs">11:23</text>
<text x="928.43" y="619" font-size="11" fill="#d8d9da" textLength="30.69" lengthAdjust="spacingAndGlyphs">11:24</text>
<text x="1028.49" y="619" font-size="11" fill="#d8d9da" textLength="30.86" lengthAdjust="spacingAndGlyphs">11:25</text>
<text x="1128.56" y="619" font-size="11" fill="#d8d9da" textLength="30.88" lengthAdjust="spacingAndGlyphs">11:26</text>
<text x="1228.63" y="619" font-size="11" fill="#d8d9da" textLength="30.96" lengthAdjust="spacingAndGlyphs">11:27</text>
<text x="1328.70" y="619" font-size="11" fill="#d8d9da" textLength="30.88" lengthAdjust="spacingAndGlyphs">11:28</text>
<text x="1428.77" y="619" font-size="11" fill="#d8d9da" textLength="30.93" lengthAdjust="spacingAndGlyphs">11:29</text>
<text x="1528.84" y="619" font-size="11" fill="#d8d9da" textLength="30.82" lengthAdjust="spacingAndGlyphs">11:30</text>
<g class="legend">
<clipPath id="cpuclip"><rect x="1590" y="405" width="270" height="223"/></clipPath><g clip-path="url(#cpuclip)">
<text x="1713.18" y="424" font-size="12" font-weight="700" fill="#33b5e5" textLength="24.78" lengthAdjust="spacingAndGlyphs">min</text>
<text x="1777.14" y="424" font-size="12" font-weight="700" fill="#33b5e5" textLength="26.05" lengthAdjust="spacingAndGlyphs">max</text>
<text x="1848.43" y="424" font-size="12" font-weight="700" fill="#33b5e5" textLength="21.50" lengthAdjust="spacingAndGlyphs">avg</text>
<rect x="1592.9" y="440.8" width="12.9" height="3.6" rx="1.2" fill="#7eb26d"/>
<text x="1612.90" y="445" font-size="12" fill="#d8d9da" textLength="32.05" lengthAdjust="spacingAndGlyphs">guest</text>
<text y="445" font-size="12" fill="#d8d9da"><tspan x="1720.24" textLength="7.21" lengthAdjust="spacingAndGlyphs">0</tspan><tspan x="1727.39" textLength="10.11" lengthAdjust="spacingAndGlyphs">%</tspan></text>
<text y="445" font-size="12" fill="#d8d9da"><tspan x="1786.24" textLength="7.21" lengthAdjust="spacingAndGlyphs">0</tspan><tspan x="1793.39" textLength="10.11" lengthAdjust="spacingAndGlyphs">%</tspan></text>
<text y="445" font-size="12" fill="#d8d9da"><tspan x="1852.24" textLength="7.21" lengthAdjust="spacingAndGlyphs">0</tspan><tspan x="1859.39" textLength="10.11" lengthAdjust="spacingAndGlyphs">%</tspan></text>
<rect x="1593" y="451.07" width="267" height="21.88" fill="#262525"/>
<rect x="1592.9" y="462.8" width="12.9" height="3.6" rx="1.2" fill="#eab839"/>
<text x="1612.90" y="467" font-size="12" fill="#d8d9da" textLength="59.56" lengthAdjust="spacingAndGlyphs">guest_nice</text>
<text y="467" font-size="12" fill="#d8d9da"><tspan x="1720.24" textLength="7.21" lengthAdjust="spacingAndGlyphs">0</tspan><tspan x="1727.39" textLength="10.11" lengthAdjust="spacingAndGlyphs">%</tspan></text>
<text y="467" font-size="12" fill="#d8d9da"><tspan x="1786.24" textLength="7.21" lengthAdjust="spacingAndGlyphs">0</tspan><tspan x="1793.39" textLength="10.11" lengthAdjust="spacingAndGlyphs">%</tspan></text>
<text y="467" font-size="12" fill="#d8d9da"><tspan x="1852.24" textLength="7.21" lengthAdjust="spacingAndGlyphs">0</tspan><tspan x="1859.39" textLength="10.11" lengthAdjust="spacingAndGlyphs">%</tspan></text>
<rect x="1592.9" y="484.8" width="12.9" height="3.6" rx="1.2" fill="#6ed0e0"/>
<text x="1612.90" y="489" font-size="12" fill="#d8d9da" textLength="20.36" lengthAdjust="spacingAndGlyphs">idle</text>
<text y="489" font-size="12" fill="#d8d9da"><tspan x="1696.11" textLength="31.39" lengthAdjust="spacingAndGlyphs">74.88</tspan><tspan x="1727.39" textLength="10.11" lengthAdjust="spacingAndGlyphs">%</tspan></text>
<text y="489" font-size="12" fill="#d8d9da"><tspan x="1762.16" textLength="31.31" lengthAdjust="spacingAndGlyphs">91.95</tspan><tspan x="1793.39" textLength="10.11" lengthAdjust="spacingAndGlyphs">%</tspan></text>
<text y="489" font-size="12" fill="#d8d9da"><tspan x="1828.21" textLength="31.29" lengthAdjust="spacingAndGlyphs">87.18</tspan><tspan x="1859.39" textLength="10.11" lengthAdjust="spacingAndGlyphs">%</tspan></text>
<rect x="1593" y="494.82" width="267" height="21.88" fill="#262525"/>
<rect x="1592.9" y="505.8" width="12.9" height="3.6" rx="1.2" fill="#ef843c"/>
<text x="1612.90" y="510" font-size="12" fill="#d8d9da" textLength="33.78" lengthAdjust="spacingAndGlyphs">iowait</text>
<text y="510" font-size="12" fill="#d8d9da"><tspan x="1703.26" textLength="24.23" lengthAdjust="spacingAndGlyphs">0.08</tspan><tspan x="1727.39" textLength="10.11" lengthAdjust="spacingAndGlyphs">%</tspan></text>
<text y="510" font-size="12" fill="#d8d9da"><tspan x="1769.26" textLength="24.17" lengthAdjust="spacingAndGlyphs">0.20</tspan><tspan x="1793.39" textLength="10.11" lengthAdjust="spacingAndGlyphs">%</tspan></text>
<text y="510" font-size="12" fill="#d8d9da"><tspan x="1835.26" textLength="24.23" lengthAdjust="spacingAndGlyphs">0.13</tspan><tspan x="1859.39" textLength="10.11" lengthAdjust="spacingAndGlyphs">%</tspan></text>
<rect x="1592.9" y="527.8" width="12.9" height="3.6" rx="1.2" fill="#e24d42"/>
<text x="1612.90" y="532" font-size="12" fill="#d8d9da" textLength="16.55" lengthAdjust="spacingAndGlyphs">irq</text>
<text y="532" font-size="12" fill="#d8d9da"><tspan x="1720.24" textLength="7.21" lengthAdjust="spacingAndGlyphs">0</tspan><tspan x="1727.39" textLength="10.11" lengthAdjust="spacingAndGlyphs">%</tspan></text>
<text y="532" font-size="12" fill="#d8d9da"><tspan x="1786.24" textLength="7.21" lengthAdjust="spacingAndGlyphs">0</tspan><tspan x="1793.39" textLength="10.11" lengthAdjust="spacingAndGlyphs">%</tspan></text>
<text y="532" font-size="12" fill="#d8d9da"><tspan x="1852.24" textLength="7.21" lengthAdjust="spacingAndGlyphs">0</tspan><tspan x="1859.39" textLength="10.11" lengthAdjust="spacingAndGlyphs">%</tspan></text>
<rect x="1593" y="538.57" width="267" height="21.88" fill="#262525"/>
<rect x="1592.9" y="549.8" width="12.9" height="3.6" rx="1.2" fill="#1f78c1"/>
<text x="1612.90" y="554" font-size="12" fill="#d8d9da" textLength="23.52" lengthAdjust="spacingAndGlyphs">nice</text>
<text y="554" font-size="12" fill="#d8d9da"><tspan x="1720.24" textLength="7.21" lengthAdjust="spacingAndGlyphs">0</tspan><tspan x="1727.39" textLength="10.11" lengthAdjust="spacingAndGlyphs">%</tspan></text>
<text y="554" font-size="12" fill="#d8d9da"><tspan x="1769.26" textLength="24.23" lengthAdjust="spacingAndGlyphs">0.03</tspan><tspan x="1793.39" textLength="10.11" lengthAdjust="spacingAndGlyphs">%</tspan></text>
<text y="554" font-size="12" fill="#d8d9da"><tspan x="1835.26" textLength="24.17" lengthAdjust="spacingAndGlyphs">0.00</tspan><tspan x="1859.39" textLength="10.11" lengthAdjust="spacingAndGlyphs">%</tspan></text>
<rect x="1592.9" y="571.8" width="12.9" height="3.6" rx="1.2" fill="#ba43a9"/>
<text x="1612.90" y="576" font-size="12" fill="#d8d9da" textLength="36.74" lengthAdjust="spacingAndGlyphs">softirq</text>
<text y="576" font-size="12" fill="#d8d9da"><tspan x="1703.26" textLength="24.28" lengthAdjust="spacingAndGlyphs">0.09</tspan><tspan x="1727.39" textLength="10.11" lengthAdjust="spacingAndGlyphs">%</tspan></text>
<text y="576" font-size="12" fill="#d8d9da"><tspan x="1769.26" textLength="24.23" lengthAdjust="spacingAndGlyphs">0.58</tspan><tspan x="1793.39" textLength="10.11" lengthAdjust="spacingAndGlyphs">%</tspan></text>
<text y="576" font-size="12" fill="#d8d9da"><tspan x="1835.26" textLength="24.23" lengthAdjust="spacingAndGlyphs">0.26</tspan><tspan x="1859.39" textLength="10.11" lengthAdjust="spacingAndGlyphs">%</tspan></text>
<rect x="1593" y="582.32" width="267" height="21.88" fill="#262525"/>
<rect x="1592.9" y="593.8" width="12.9" height="3.6" rx="1.2" fill="#705da0"/>
<text x="1612.90" y="598" font-size="12" fill="#d8d9da" textLength="27.53" lengthAdjust="spacingAndGlyphs">steal</text>
<text y="598" font-size="12" fill="#d8d9da"><tspan x="1720.24" textLength="7.21" lengthAdjust="spacingAndGlyphs">0</tspan><tspan x="1727.39" textLength="10.11" lengthAdjust="spacingAndGlyphs">%</tspan></text>
<text y="598" font-size="12" fill="#d8d9da"><tspan x="1786.24" textLength="7.21" lengthAdjust="spacingAndGlyphs">0</tspan><tspan x="1793.39" textLength="10.11" lengthAdjust="spacingAndGlyphs">%</tspan></text>
<text y="598" font-size="12" fill="#d8d9da"><tspan x="1852.24" textLength="7.21" lengthAdjust="spacingAndGlyphs">0</tspan><tspan x="1859.39" textLength="10.11" lengthAdjust="spacingAndGlyphs">%</tspan></text>
<rect x="1592.9" y="615.8" width="12.9" height="3.6" rx="1.2" fill="#508642"/>
<text x="1612.90" y="620" font-size="12" fill="#d8d9da" textLength="40.50" lengthAdjust="spacingAndGlyphs">system</text>
<text y="620" font-size="12" fill="#d8d9da"><tspan x="1702.78" textLength="24.70" lengthAdjust="spacingAndGlyphs">1.75</tspan><tspan x="1727.39" textLength="10.11" lengthAdjust="spacingAndGlyphs">%</tspan></text>
<text y="620" font-size="12" fill="#d8d9da"><tspan x="1769.28" textLength="24.21" lengthAdjust="spacingAndGlyphs">3.88</tspan><tspan x="1793.39" textLength="10.11" lengthAdjust="spacingAndGlyphs">%</tspan></text>
<text y="620" font-size="12" fill="#d8d9da"><tspan x="1835.12" textLength="24.43" lengthAdjust="spacingAndGlyphs">2.39</tspan><tspan x="1859.39" textLength="10.11" lengthAdjust="spacingAndGlyphs">%</tspan></text>
</g>
<rect x="1860" y="411" width="20" height="212" fill="#ececec"/>
<rect x="1865" y="427" width="10" height="179.2" rx="5" fill="#b9b9b9"/>
<rect x="1865" y="427" width="10" height="156.2" rx="5" fill="#6f7277"/>
<path d="M1866.2 419.3l3.5-3.5l3.5 3.5M1866.6 613.6l3.4 3.4l3.4-3.4" stroke="#3a3a3a" stroke-width="1.5" fill="none"/>
</g>
<g fill="#474747"><rect x="1882.4" y="624.8" width="2.2" height="2.2" rx="0.6"/><rect x="1879.1" y="624.8" width="2.2" height="2.2" rx="0.6"/><rect x="1875.8" y="624.8" width="2.2" height="2.2" rx="0.6"/><rect x="1882.4" y="621.4" width="2.2" height="2.2" rx="0.6"/><rect x="1879.1" y="621.4" width="2.2" height="2.2" rx="0.6"/><rect x="1882.4" y="618.0" width="2.2" height="2.2" rx="0.6"/></g>
</svg></section>
<div class="rowh" style="top:647px"><i></i><i></i><i></i></div>
<section class="panel" style="left:9px;top:640px;width:1878px;height:250px">
<svg width="1878" height="250" viewBox="9 640 1878 250">
<text x="896.36" y="660" font-size="14" fill="#d8d9da" textLength="102.82" lengthAdjust="spacingAndGlyphs">Memory Usage</text>
<path d="M66 675.5H1511M66 712.5H1511M66 749.5H1511M66 786.5H1511M66 824.5H1511M66 861.5H1511" stroke="#464646" stroke-width="1" fill="none" shape-rendering="crispEdges"/>
<path d="M148.40 675V862M245.30 675V862M341.60 675V862M437.30 675V862M533.70 675V862M630.20 675V862M727.00 675V862M823.30 675V862M919.40 675V862M1015.70 675V862M1112.50 675V862M1208.90 675V862M1304.60 675V862M1401.00 675V862M1497.50 675V862" stroke="#464646" stroke-width="1.7" stroke-opacity="0.6" fill="none"/>
<path d="M67.0 833.40L157.0 833.40L158.0 833.10L453.0 833.10L456.0 832.50L560.0 832.30L650.0 832.10L845.0 832.00L850.0 831.50L1000.0 831.20L1030.0 831.00L1032.0 830.20L1038.0 830.00L1040.0 828.80L1280.0 828.80L1282.0 828.00L1360.0 828.00L1362.0 828.60L1395.0 828.60L1397.0 827.40L1415.0 827.40L1418.0 828.50L1425.0 828.50L1427.0 826.40L1440.0 826.40L1443.0 825.60L1480.0 825.30L1483.0 824.20L1500.0 823.60L1511.0 823.10L1511 861L67 861Z" fill="#bf1b00" fill-opacity="0.4"/>
<path d="M67.0 818.10L238.0 818.10L239.5 818.90L262.0 818.90L263.5 818.10L365.0 817.90L367.0 818.70L396.0 818.70L398.0 819.20L440.0 819.20L445.0 818.90L453.0 819.30L456.0 820.00L462.0 820.00L470.0 819.10L533.0 819.10L535.0 817.60L573.0 817.60L576.0 818.90L600.0 819.10L650.0 819.00L742.0 818.90L745.0 818.40L790.0 818.40L792.0 817.50L855.0 817.50L857.0 818.70L940.0 818.70L960.0 819.20L1010.0 819.20L1036.0 819.40L1040.0 820.00L1050.0 820.00L1055.0 818.90L1085.0 818.90L1088.0 819.40L1100.0 819.40L1105.0 820.00L1145.0 820.00L1150.0 819.40L1215.0 819.40L1218.0 820.00L1225.0 820.00L1230.0 819.50L1265.0 819.20L1267.0 818.10L1272.0 818.10L1275.0 820.00L1280.0 820.00L1283.0 818.40L1330.0 818.40L1332.0 817.20L1345.0 817.20L1347.0 819.50L1352.0 819.50L1355.0 817.80L1385.0 817.80L1388.0 819.20L1393.0 819.20L1396.0 817.90L1410.0 817.90L1412.0 818.70L1440.0 818.70L1443.0 815.20L1470.0 815.20L1475.0 816.00L1480.0 816.00L1483.0 814.90L1505.0 814.90L1508.0 816.80L1511.0 816.80L1511.0 823.10L1500.0 823.60L1483.0 824.20L1480.0 825.30L1443.0 825.60L1440.0 826.40L1427.0 826.40L1425.0 828.50L1418.0 828.50L1415.0 827.40L1397.0 827.40L1395.0 828.60L1362.0 828.60L1360.0 828.00L1282.0 828.00L1280.0 828.80L1040.0 828.80L1038.0 830.00L1032.0 830.20L1030.0 831.00L1000.0 831.20L850.0 831.50L845.0 832.00L650.0 832.10L560.0 832.30L456.0 832.50L453.0 833.10L158.0 833.10L157.0 833.40L67.0 833.40Z" fill="#7eb26d" fill-opacity="0.4"/>
<path d="M67.0 804.20L238.0 804.20L239.5 805.00L262.0 805.00L263.5 804.20L365.0 804.00L367.0 804.80L396.0 804.80L398.0 805.30L440.0 805.30L445.0 805.00L453.0 805.40L456.0 806.10L462.0 806.10L470.0 805.20L533.0 805.20L535.0 803.70L573.0 803.70L576.0 805.00L600.0 805.20L650.0 805.10L742.0 805.00L745.0 804.50L790.0 804.50L792.0 803.60L855.0 803.60L857.0 804.80L940.0 804.80L960.0 805.30L1010.0 805.30L1036.0 805.50L1040.0 806.10L1050.0 806.10L1055.0 805.00L1085.0 805.00L1088.0 805.50L1100.0 805.50L1105.0 806.10L1145.0 806.10L1150.0 805.50L1215.0 805.50L1218.0 806.10L1225.0 806.10L1230.0 805.60L1265.0 805.30L1267.0 804.20L1272.0 804.20L1275.0 806.10L1280.0 806.10L1283.0 804.50L1330.0 804.50L1332.0 803.30L1345.0 803.30L1347.0 805.60L1352.0 805.60L1355.0 803.90L1385.0 803.90L1388.0 805.30L1393.0 805.30L1396.0 804.00L1410.0 804.00L1412.0 804.80L1440.0 804.80L1443.0 801.30L1470.0 801.30L1475.0 802.10L1480.0 802.10L1483.0 801.00L1505.0 801.00L1508.0 802.90L1511.0 802.90L1511.0 816.80L1508.0 816.80L1505.0 814.90L1483.0 814.90L1480.0 816.00L1475.0 816.00L1470.0 815.20L1443.0 815.20L1440.0 818.70L1412.0 818.70L1410.0 817.90L1396.0 817.90L1393.0 819.20L1388.0 819.20L1385.0 817.80L1355.0 817.80L1352.0 819.50L1347.0 819.50L1345.0 817.20L1332.0 817.20L1330.0 818.40L1283.0 818.40L1280.0 820.00L1275.0 820.00L1272.0 818.10L1267.0 818.10L1265.0 819.20L1230.0 819.50L1225.0 820.00L1218.0 820.00L1215.0 819.40L1150.0 819.40L1145.0 820.00L1105.0 820.00L1100.0 819.40L1088.0 819.40L1085.0 818.90L1055.0 818.90L1050.0 820.00L1040.0 820.00L1036.0 819.40L1010.0 819.20L960.0 819.20L940.0 818.70L857.0 818.70L855.0 817.50L792.0 817.50L790.0 818.40L745.0 818.40L742.0 818.90L650.0 819.00L600.0 819.10L576.0 818.90L573.0 817.60L535.0 817.60L533.0 819.10L470.0 819.10L462.0 820.00L456.0 820.00L453.0 819.30L445.0 818.90L440.0 819.20L398.0 819.20L396.0 818.70L367.0 818.70L365.0 817.90L263.5 818.10L262.0 818.90L239.5 818.90L238.0 818.10L67.0 818.10Z" fill="#6ed0e0" fill-opacity="0.4"/>
<path d="M67.0 703.20L1511.0 703.20L1511.0 802.90L1508.0 802.90L1505.0 801.00L1483.0 801.00L1480.0 802.10L1475.0 802.10L1470.0 801.30L1443.0 801.30L1440.0 804.80L1412.0 804.80L1410.0 804.00L1396.0 804.00L1393.0 805.30L1388.0 805.30L1385.0 803.90L1355.0 803.90L1352.0 805.60L1347.0 805.60L1345.0 803.30L1332.0 803.30L1330.0 804.50L1283.0 804.50L1280.0 806.10L1275.0 806.10L1272.0 804.20L1267.0 804.20L1265.0 805.30L1230.0 805.60L1225.0 806.10L1218.0 806.10L1215.0 805.50L1150.0 805.50L1145.0 806.10L1105.0 806.10L1100.0 805.50L1088.0 805.50L1085.0 805.00L1055.0 805.00L1050.0 806.10L1040.0 806.10L1036.0 805.50L1010.0 805.30L960.0 805.30L940.0 804.80L857.0 804.80L855.0 803.60L792.0 803.60L790.0 804.50L745.0 804.50L742.0 805.00L650.0 805.10L600.0 805.20L576.0 805.00L573.0 803.70L535.0 803.70L533.0 805.20L470.0 805.20L462.0 806.10L456.0 806.10L453.0 805.40L445.0 805.00L440.0 805.30L398.0 805.30L396.0 804.80L367.0 804.80L365.0 804.00L263.5 804.20L262.0 805.00L239.5 805.00L238.0 804.20L67.0 804.20Z" fill="#ef843c" fill-opacity="0.4"/>
<path d="M67.0 833.40L157.0 833.40L158.0 833.10L453.0 833.10L456.0 832.50L560.0 832.30L650.0 832.10L845.0 832.00L850.0 831.50L1000.0 831.20L1030.0 831.00L1032.0 830.20L1038.0 830.00L1040.0 828.80L1280.0 828.80L1282.0 828.00L1360.0 828.00L1362.0 828.60L1395.0 828.60L1397.0 827.40L1415.0 827.40L1418.0 828.50L1425.0 828.50L1427.0 826.40L1440.0 826.40L1443.0 825.60L1480.0 825.30L1483.0 824.20L1500.0 823.60L1511.0 823.10" stroke="#bf1b00" stroke-width="1.3" fill="none"/>
<path d="M67.0 818.10L238.0 818.10L239.5 818.90L262.0 818.90L263.5 818.10L365.0 817.90L367.0 818.70L396.0 818.70L398.0 819.20L440.0 819.20L445.0 818.90L453.0 819.30L456.0 820.00L462.0 820.00L470.0 819.10L533.0 819.10L535.0 817.60L573.0 817.60L576.0 818.90L600.0 819.10L650.0 819.00L742.0 818.90L745.0 818.40L790.0 818.40L792.0 817.50L855.0 817.50L857.0 818.70L940.0 818.70L960.0 819.20L1010.0 819.20L1036.0 819.40L1040.0 820.00L1050.0 820.00L1055.0 818.90L1085.0 818.90L1088.0 819.40L1100.0 819.40L1105.0 820.00L1145.0 820.00L1150.0 819.40L1215.0 819.40L1218.0 820.00L1225.0 820.00L1230.0 819.50L1265.0 819.20L1267.0 818.10L1272.0 818.10L1275.0 820.00L1280.0 820.00L1283.0 818.40L1330.0 818.40L1332.0 817.20L1345.0 817.20L1347.0 819.50L1352.0 819.50L1355.0 817.80L1385.0 817.80L1388.0 819.20L1393.0 819.20L1396.0 817.90L1410.0 817.90L1412.0 818.70L1440.0 818.70L1443.0 815.20L1470.0 815.20L1475.0 816.00L1480.0 816.00L1483.0 814.90L1505.0 814.90L1508.0 816.80L1511.0 816.80" stroke="#7eb26d" stroke-width="1.25" fill="none"/>
<path d="M67.0 804.20L238.0 804.20L239.5 805.00L262.0 805.00L263.5 804.20L365.0 804.00L367.0 804.80L396.0 804.80L398.0 805.30L440.0 805.30L445.0 805.00L453.0 805.40L456.0 806.10L462.0 806.10L470.0 805.20L533.0 805.20L535.0 803.70L573.0 803.70L576.0 805.00L600.0 805.20L650.0 805.10L742.0 805.00L745.0 804.50L790.0 804.50L792.0 803.60L855.0 803.60L857.0 804.80L940.0 804.80L960.0 805.30L1010.0 805.30L1036.0 805.50L1040.0 806.10L1050.0 806.10L1055.0 805.00L1085.0 805.00L1088.0 805.50L1100.0 805.50L1105.0 806.10L1145.0 806.10L1150.0 805.50L1215.0 805.50L1218.0 806.10L1225.0 806.10L1230.0 805.60L1265.0 805.30L1267.0 804.20L1272.0 804.20L1275.0 806.10L1280.0 806.10L1283.0 804.50L1330.0 804.50L1332.0 803.30L1345.0 803.30L1347.0 805.60L1352.0 805.60L1355.0 803.90L1385.0 803.90L1388.0 805.30L1393.0 805.30L1396.0 804.00L1410.0 804.00L1412.0 804.80L1440.0 804.80L1443.0 801.30L1470.0 801.30L1475.0 802.10L1480.0 802.10L1483.0 801.00L1505.0 801.00L1508.0 802.90L1511.0 802.90" stroke="#6ed0e0" stroke-width="1.25" fill="none"/>
<path d="M67.0 703.20L1511.0 703.20" stroke="#ef843c" stroke-width="2" fill="none"/>
<text x="20.47" y="679" font-size="11" fill="#d8d9da" textLength="40.47" lengthAdjust="spacingAndGlyphs">8.4 GiB</text>
<text x="20.38" y="716" font-size="11" fill="#d8d9da" textLength="40.57" lengthAdjust="spacingAndGlyphs">7.5 GiB</text>
<text x="20.38" y="753" font-size="11" fill="#d8d9da" textLength="40.56" lengthAdjust="spacingAndGlyphs">6.5 GiB</text>
<text x="20.51" y="791" font-size="11" fill="#d8d9da" textLength="40.42" lengthAdjust="spacingAndGlyphs">5.6 GiB</text>
<text x="20.72" y="828" font-size="11" fill="#d8d9da" textLength="40.21" lengthAdjust="spacingAndGlyphs">4.7 GiB</text>
<text x="20.54" y="865" font-size="11" fill="#d8d9da" textLength="40.40" lengthAdjust="spacingAndGlyphs">3.7 GiB</text>
<text x="133.06" y="880" font-size="11" fill="#d8d9da" textLength="30.88" lengthAdjust="spacingAndGlyphs">11:16</text>
<text x="229.34" y="880" font-size="11" fill="#d8d9da" textLength="30.96" lengthAdjust="spacingAndGlyphs">11:17</text>
<text x="325.62" y="880" font-size="11" fill="#d8d9da" textLength="30.88" lengthAdjust="spacingAndGlyphs">11:18</text>
<text x="421.90" y="880" font-size="11" fill="#d8d9da" textLength="30.93" lengthAdjust="spacingAndGlyphs">11:19</text>
<text x="518.18" y="880" font-size="11" fill="#d8d9da" textLength="30.82" lengthAdjust="spacingAndGlyphs">11:20</text>
<text x="614.46" y="880" font-size="11" fill="#d8d9da" textLength="30.95" lengthAdjust="spacingAndGlyphs">11:21</text>
<text x="710.74" y="880" font-size="11" fill="#d8d9da" textLength="30.96" lengthAdjust="spacingAndGlyphs">11:22</text>
<text x="807.02" y="880" font-size="11" fill="#d8d9da" textLength="30.88" lengthAdjust="spacingAndGlyphs">11:23</text>
<text x="903.31" y="880" font-size="11" fill="#d8d9da" textLength="30.69" lengthAdjust="spacingAndGlyphs">11:24</text>
<text x="999.58" y="880" font-size="11" fill="#d8d9da" textLength="30.86" lengthAdjust="spacingAndGlyphs">11:25</text>
<text x="1095.86" y="880" font-size="11" fill="#d8d9da" textLength="30.88" lengthAdjust="spacingAndGlyphs">11:26</text>
<text x="1192.14" y="880" font-size="11" fill="#d8d9da" textLength="30.96" lengthAdjust="spacingAndGlyphs">11:27</text>
<text x="1288.42" y="880" font-size="11" fill="#d8d9da" textLength="30.88" lengthAdjust="spacingAndGlyphs">11:28</text>
<text x="1384.70" y="880" font-size="11" fill="#d8d9da" textLength="30.93" lengthAdjust="spacingAndGlyphs">11:29</text>
<text x="1480.98" y="880" font-size="11" fill="#d8d9da" textLength="30.82" lengthAdjust="spacingAndGlyphs">11:30</text>
<g class="legend">
<text x="1669.08" y="685" font-size="12" font-weight="700" fill="#33b5e5" textLength="24.78" lengthAdjust="spacingAndGlyphs">min</text>
<text x="1755.14" y="685" font-size="12" font-weight="700" fill="#33b5e5" textLength="26.05" lengthAdjust="spacingAndGlyphs">max</text>
<text x="1848.33" y="685" font-size="12" font-weight="700" fill="#33b5e5" textLength="21.50" lengthAdjust="spacingAndGlyphs">avg</text>
<rect x="1543.9" y="701.8" width="12.9" height="3.6" rx="1.2" fill="#bf1b00"/>
<text x="1564.00" y="706" font-size="12" fill="#d8d9da" textLength="30.66" lengthAdjust="spacingAndGlyphs">Used</text>
<text x="1646.72" y="706" font-size="12" fill="#d8d9da" textLength="46.91" lengthAdjust="spacingAndGlyphs">4.41 GiB</text>
<text x="1734.82" y="706" font-size="12" fill="#d8d9da" textLength="46.91" lengthAdjust="spacingAndGlyphs">4.67 GiB</text>
<text x="1822.72" y="706" font-size="12" fill="#d8d9da" textLength="46.91" lengthAdjust="spacingAndGlyphs">4.48 GiB</text>
<rect x="1544" y="712.57" width="336" height="21.88" fill="#262525"/>
<rect x="1543.9" y="723.8" width="12.9" height="3.6" rx="1.2" fill="#7eb26d"/>
<text x="1564.00" y="728" font-size="12" fill="#d8d9da" textLength="25.57" lengthAdjust="spacingAndGlyphs">Free</text>
<text x="1630.04" y="728" font-size="12" fill="#d8d9da" textLength="63.62" lengthAdjust="spacingAndGlyphs">156.32 MiB</text>
<text x="1718.62" y="728" font-size="12" fill="#d8d9da" textLength="63.13" lengthAdjust="spacingAndGlyphs">399.32 MiB</text>
<text x="1806.52" y="728" font-size="12" fill="#d8d9da" textLength="63.13" lengthAdjust="spacingAndGlyphs">316.81 MiB</text>
<rect x="1543.9" y="745.8" width="12.9" height="3.6" rx="1.2" fill="#6ed0e0"/>
<text x="1564.00" y="750" font-size="12" fill="#d8d9da" textLength="41.45" lengthAdjust="spacingAndGlyphs">Buffers</text>
<text x="1630.52" y="750" font-size="12" fill="#d8d9da" textLength="63.13" lengthAdjust="spacingAndGlyphs">361.65 MiB</text>
<text x="1718.62" y="750" font-size="12" fill="#d8d9da" textLength="63.13" lengthAdjust="spacingAndGlyphs">366.16 MiB</text>
<text x="1806.52" y="750" font-size="12" fill="#d8d9da" textLength="63.13" lengthAdjust="spacingAndGlyphs">363.79 MiB</text>
<rect x="1544" y="756.32" width="336" height="21.88" fill="#262525"/>
<rect x="1543.9" y="767.8" width="12.9" height="3.6" rx="1.2" fill="#ef843c"/>
<text x="1564.00" y="772" font-size="12" fill="#d8d9da" textLength="43.04" lengthAdjust="spacingAndGlyphs">Cached</text>
<text x="1646.39" y="772" font-size="12" fill="#d8d9da" textLength="47.25" lengthAdjust="spacingAndGlyphs">2.45 GiB</text>
<text x="1734.49" y="772" font-size="12" fill="#d8d9da" textLength="47.25" lengthAdjust="spacingAndGlyphs">2.58 GiB</text>
<text x="1822.39" y="772" font-size="12" fill="#d8d9da" textLength="47.25" lengthAdjust="spacingAndGlyphs">2.54 GiB</text>
</g>
<g fill="#474747"><rect x="1882.4" y="885.8" width="2.2" height="2.2" rx="0.6"/><rect x="1879.1" y="885.8" width="2.2" height="2.2" rx="0.6"/><rect x="1875.8" y="885.8" width="2.2" height="2.2" rx="0.6"/><rect x="1882.4" y="882.4" width="2.2" height="2.2" rx="0.6"/><rect x="1879.1" y="882.4" width="2.2" height="2.2" rx="0.6"/><rect x="1882.4" y="879.0" width="2.2" height="2.2" rx="0.6"/></g>
</svg></section>
<div class="rowh" style="top:908px"><i></i><i></i><i></i></div>
<section class="panel" style="left:9px;top:901px;width:1878px;height:130px">
<svg width="1878" height="130" viewBox="9 901 1878 130">
<text x="915.35" y="922" font-size="14" fill="#d8d9da" textLength="65.70" lengthAdjust="spacingAndGlyphs">I/O Usage</text>
<path d="M78 936.5H1429M78 982.5H1429M78 1029.5H1429" stroke="#464646" stroke-width="1" fill="none" shape-rendering="crispEdges"/>
<path d="M155.30 936V1030M244.70 936V1030M334.70 936V1030M424.50 936V1030M513.70 936V1030M603.70 936V1030M693.00 936V1030M783.00 936V1030M873.30 936V1030M962.40 936V1030M1052.70 936V1030M1142.30 936V1030M1231.70 936V1030M1321.60 936V1030M1411.60 936V1030" stroke="#464646" stroke-width="1.7" stroke-opacity="0.6" fill="none"/>
<path d="M447.1 1030L448.1 951.2H454.4L455.4 1030" stroke="#eab839" stroke-width="2" fill="#eab839" fill-opacity="0.1" stroke-linejoin="round"/>
<path d="M469.2 1030L470.2 957.1H476.9L477.9 1030" stroke="#eab839" stroke-width="2" fill="#eab839" fill-opacity="0.1" stroke-linejoin="round"/>
<path d="M1344.3 1030L1345.3 958.3H1351.2L1352.2 1030" stroke="#6ed0e0" stroke-width="2" fill="#6ed0e0" fill-opacity="0.1" stroke-linejoin="round"/>
<text x="20.62" y="940" font-size="11" fill="#d8d9da" textLength="52.23" lengthAdjust="spacingAndGlyphs">4.0 MBps</text>
<text x="20.43" y="987" font-size="11" fill="#d8d9da" textLength="52.42" lengthAdjust="spacingAndGlyphs">3.0 MBps</text>
<text x="1432.61" y="940" font-size="11" fill="#d8d9da" textLength="34.14" lengthAdjust="spacingAndGlyphs">40 ms</text>
<text x="1432.42" y="987" font-size="11" fill="#d8d9da" textLength="34.34" lengthAdjust="spacingAndGlyphs">30 ms</text>
<g class="legend">
<text x="1659.28" y="946" font-size="12" font-weight="700" fill="#33b5e5" textLength="24.78" lengthAdjust="spacingAndGlyphs">min</text>
<text x="1750.24" y="946" font-size="12" font-weight="700" fill="#33b5e5" textLength="26.05" lengthAdjust="spacingAndGlyphs">max</text>
<text x="1848.53" y="946" font-size="12" font-weight="700" fill="#33b5e5" textLength="21.50" lengthAdjust="spacingAndGlyphs">avg</text>
<rect x="1485.9" y="962.8" width="12.9" height="3.6" rx="1.2" fill="#7eb26d"/>
<text x="1505.80" y="967" font-size="12" fill="#d8d9da" textLength="27.50" lengthAdjust="spacingAndGlyphs">read</text>
<text x="1652.73" y="967" font-size="12" fill="#d8d9da" textLength="30.91" lengthAdjust="spacingAndGlyphs">0 Bps</text>
<text x="1708.26" y="967" font-size="12" fill="#d8d9da" textLength="68.38" lengthAdjust="spacingAndGlyphs">171.21 kBps</text>
<text x="1815.27" y="967" font-size="12" fill="#d8d9da" textLength="54.37" lengthAdjust="spacingAndGlyphs">1.57 kBps</text>
<rect x="1486" y="973.48" width="394" height="21.88" fill="#262525"/>
<rect x="1485.9" y="984.8" width="12.9" height="3.6" rx="1.2" fill="#eab839"/>
<text x="1505.80" y="989" font-size="12" fill="#d8d9da" textLength="39.86" lengthAdjust="spacingAndGlyphs">written</text>
<text x="1622.59" y="989" font-size="12" fill="#d8d9da" textLength="61.05" lengthAdjust="spacingAndGlyphs">24.58 kBps</text>
<text x="1717.73" y="989" font-size="12" fill="#d8d9da" textLength="58.91" lengthAdjust="spacingAndGlyphs">3.67 MBps</text>
<text x="1801.26" y="989" font-size="12" fill="#d8d9da" textLength="68.38" lengthAdjust="spacingAndGlyphs">154.40 kBps</text>
<rect x="1485.9" y="1006.8" width="12.9" height="3.6" rx="1.2" fill="#6ed0e0"/>
<text x="1505.80" y="1011" font-size="12" fill="#d8d9da" textLength="38.77" lengthAdjust="spacingAndGlyphs">io time</text>
<text x="1548.49" y="1011" font-size="12" fill="#7d7d7d" textLength="45.02" lengthAdjust="spacingAndGlyphs">(right-y)</text>
<text x="1639.25" y="1011" font-size="12" fill="#d8d9da" textLength="44.40" lengthAdjust="spacingAndGlyphs">1.20 ms</text>
<text x="1725.73" y="1011" font-size="12" fill="#d8d9da" textLength="50.92" lengthAdjust="spacingAndGlyphs">35.20 ms</text>
<text x="1825.66" y="1011" font-size="12" fill="#d8d9da" textLength="43.98" lengthAdjust="spacingAndGlyphs">8.22 ms</text>
</g>
<g fill="#474747"><rect x="1882.4" y="1027.8" width="2.2" height="2.2" rx="0.6"/><rect x="1879.1" y="1027.8" width="2.2" height="2.2" rx="0.6"/><rect x="1875.8" y="1027.8" width="2.2" height="2.2" rx="0.6"/><rect x="1882.4" y="1024.4" width="2.2" height="2.2" rx="0.6"/><rect x="1879.1" y="1024.4" width="2.2" height="2.2" rx="0.6"/><rect x="1882.4" y="1021.0" width="2.2" height="2.2" rx="0.6"/></g>
</svg></section>
</main></body></html>
